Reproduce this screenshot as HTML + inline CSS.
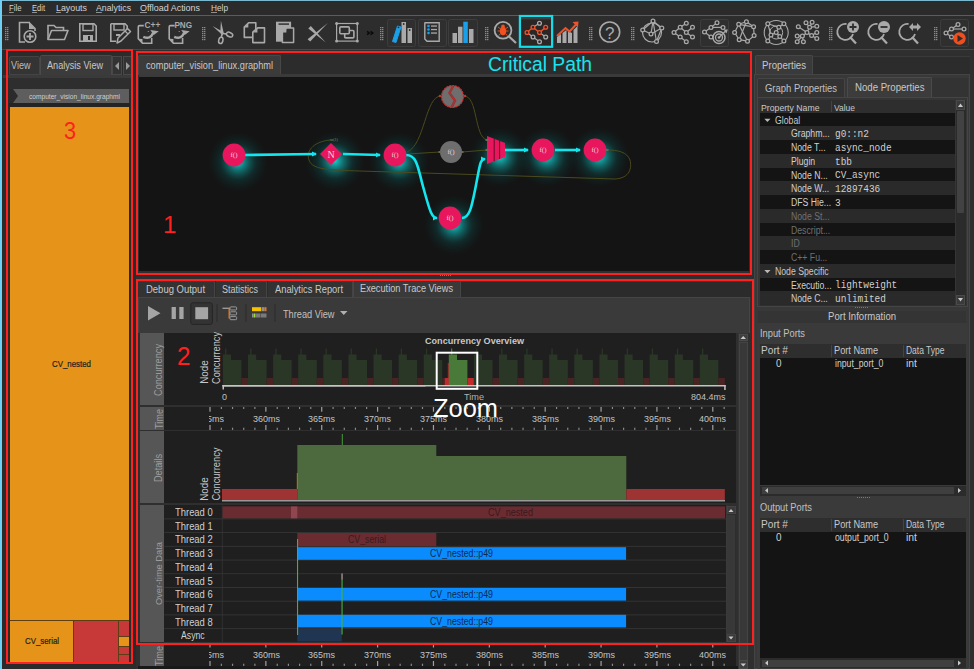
<!DOCTYPE html><html><head><meta charset="utf-8"><style>
*{margin:0;padding:0;box-sizing:border-box}
html,body{width:974px;height:669px;overflow:hidden;background:#2f2f2f;font-family:"Liberation Sans",sans-serif;color:#c8c8c8}
.t{position:absolute;white-space:nowrap;line-height:1}
svg{position:absolute;left:0;top:0;overflow:visible}
u{text-decoration-color:#909090}
</style></head><body>
<div style="position:absolute;left:0px;top:0px;width:974px;height:15px;background:#2b2b2b"></div>
<div style="position:absolute;left:0px;top:0px;width:974px;height:1px;background:#7ab8d0"></div>
<div style="position:absolute;left:2px;top:15px;width:972px;height:1px;background:#5c5c5c"></div>
<div class="t" style="left:9.00px;top:4.38px;font-size:9px;font-family:'Liberation Sans';font-weight:normal;color:#d2d2d2;transform:scaleX(0.862);transform-origin:0 0;"><u>F</u>ile</div>
<div class="t" style="left:32.00px;top:4.38px;font-size:9px;font-family:'Liberation Sans';font-weight:normal;color:#d2d2d2;transform:scaleX(0.838);transform-origin:0 0;"><u>E</u>dit</div>
<div class="t" style="left:56.00px;top:4.38px;font-size:9px;font-family:'Liberation Sans';font-weight:normal;color:#d2d2d2;transform:scaleX(0.983);transform-origin:0 0;"><u>L</u>ayouts</div>
<div class="t" style="left:96.00px;top:4.38px;font-size:9px;font-family:'Liberation Sans';font-weight:normal;color:#d2d2d2;transform:scaleX(0.972);transform-origin:0 0;"><u>A</u>nalytics</div>
<div class="t" style="left:140.00px;top:4.38px;font-size:9px;font-family:'Liberation Sans';font-weight:normal;color:#d2d2d2;transform:scaleX(0.994);transform-origin:0 0;"><u>O</u>ffload Actions</div>
<div class="t" style="left:211.00px;top:4.38px;font-size:9px;font-family:'Liberation Sans';font-weight:normal;color:#d2d2d2;transform:scaleX(0.918);transform-origin:0 0;"><u>H</u>elp</div>
<div style="position:absolute;left:2px;top:16px;width:972px;height:33px;background:#2d2d2d"></div>
<svg width="974" height="669"><rect x="5" y="27" width="1.4" height="1.2" fill="#8a8a8a"/><rect x="7" y="27" width="1.4" height="1.2" fill="#8a8a8a"/><rect x="5" y="29" width="1.4" height="1.2" fill="#8a8a8a"/><rect x="7" y="29" width="1.4" height="1.2" fill="#8a8a8a"/><rect x="5" y="31" width="1.4" height="1.2" fill="#8a8a8a"/><rect x="7" y="31" width="1.4" height="1.2" fill="#8a8a8a"/><rect x="5" y="33" width="1.4" height="1.2" fill="#8a8a8a"/><rect x="7" y="33" width="1.4" height="1.2" fill="#8a8a8a"/><rect x="5" y="35" width="1.4" height="1.2" fill="#8a8a8a"/><rect x="7" y="35" width="1.4" height="1.2" fill="#8a8a8a"/><rect x="5" y="37" width="1.4" height="1.2" fill="#8a8a8a"/><rect x="7" y="37" width="1.4" height="1.2" fill="#8a8a8a"/><rect x="5" y="39" width="1.4" height="1.2" fill="#8a8a8a"/><rect x="7" y="39" width="1.4" height="1.2" fill="#8a8a8a"/><rect x="202" y="27" width="1.4" height="1.2" fill="#8a8a8a"/><rect x="204" y="27" width="1.4" height="1.2" fill="#8a8a8a"/><rect x="202" y="29" width="1.4" height="1.2" fill="#8a8a8a"/><rect x="204" y="29" width="1.4" height="1.2" fill="#8a8a8a"/><rect x="202" y="31" width="1.4" height="1.2" fill="#8a8a8a"/><rect x="204" y="31" width="1.4" height="1.2" fill="#8a8a8a"/><rect x="202" y="33" width="1.4" height="1.2" fill="#8a8a8a"/><rect x="204" y="33" width="1.4" height="1.2" fill="#8a8a8a"/><rect x="202" y="35" width="1.4" height="1.2" fill="#8a8a8a"/><rect x="204" y="35" width="1.4" height="1.2" fill="#8a8a8a"/><rect x="202" y="37" width="1.4" height="1.2" fill="#8a8a8a"/><rect x="204" y="37" width="1.4" height="1.2" fill="#8a8a8a"/><rect x="202" y="39" width="1.4" height="1.2" fill="#8a8a8a"/><rect x="204" y="39" width="1.4" height="1.2" fill="#8a8a8a"/><rect x="380" y="27" width="1.4" height="1.2" fill="#8a8a8a"/><rect x="382" y="27" width="1.4" height="1.2" fill="#8a8a8a"/><rect x="380" y="29" width="1.4" height="1.2" fill="#8a8a8a"/><rect x="382" y="29" width="1.4" height="1.2" fill="#8a8a8a"/><rect x="380" y="31" width="1.4" height="1.2" fill="#8a8a8a"/><rect x="382" y="31" width="1.4" height="1.2" fill="#8a8a8a"/><rect x="380" y="33" width="1.4" height="1.2" fill="#8a8a8a"/><rect x="382" y="33" width="1.4" height="1.2" fill="#8a8a8a"/><rect x="380" y="35" width="1.4" height="1.2" fill="#8a8a8a"/><rect x="382" y="35" width="1.4" height="1.2" fill="#8a8a8a"/><rect x="380" y="37" width="1.4" height="1.2" fill="#8a8a8a"/><rect x="382" y="37" width="1.4" height="1.2" fill="#8a8a8a"/><rect x="380" y="39" width="1.4" height="1.2" fill="#8a8a8a"/><rect x="382" y="39" width="1.4" height="1.2" fill="#8a8a8a"/><rect x="485" y="27" width="1.4" height="1.2" fill="#8a8a8a"/><rect x="487" y="27" width="1.4" height="1.2" fill="#8a8a8a"/><rect x="485" y="29" width="1.4" height="1.2" fill="#8a8a8a"/><rect x="487" y="29" width="1.4" height="1.2" fill="#8a8a8a"/><rect x="485" y="31" width="1.4" height="1.2" fill="#8a8a8a"/><rect x="487" y="31" width="1.4" height="1.2" fill="#8a8a8a"/><rect x="485" y="33" width="1.4" height="1.2" fill="#8a8a8a"/><rect x="487" y="33" width="1.4" height="1.2" fill="#8a8a8a"/><rect x="485" y="35" width="1.4" height="1.2" fill="#8a8a8a"/><rect x="487" y="35" width="1.4" height="1.2" fill="#8a8a8a"/><rect x="485" y="37" width="1.4" height="1.2" fill="#8a8a8a"/><rect x="487" y="37" width="1.4" height="1.2" fill="#8a8a8a"/><rect x="485" y="39" width="1.4" height="1.2" fill="#8a8a8a"/><rect x="487" y="39" width="1.4" height="1.2" fill="#8a8a8a"/><rect x="589" y="27" width="1.4" height="1.2" fill="#8a8a8a"/><rect x="591" y="27" width="1.4" height="1.2" fill="#8a8a8a"/><rect x="589" y="29" width="1.4" height="1.2" fill="#8a8a8a"/><rect x="591" y="29" width="1.4" height="1.2" fill="#8a8a8a"/><rect x="589" y="31" width="1.4" height="1.2" fill="#8a8a8a"/><rect x="591" y="31" width="1.4" height="1.2" fill="#8a8a8a"/><rect x="589" y="33" width="1.4" height="1.2" fill="#8a8a8a"/><rect x="591" y="33" width="1.4" height="1.2" fill="#8a8a8a"/><rect x="589" y="35" width="1.4" height="1.2" fill="#8a8a8a"/><rect x="591" y="35" width="1.4" height="1.2" fill="#8a8a8a"/><rect x="589" y="37" width="1.4" height="1.2" fill="#8a8a8a"/><rect x="591" y="37" width="1.4" height="1.2" fill="#8a8a8a"/><rect x="589" y="39" width="1.4" height="1.2" fill="#8a8a8a"/><rect x="591" y="39" width="1.4" height="1.2" fill="#8a8a8a"/><rect x="631" y="27" width="1.4" height="1.2" fill="#8a8a8a"/><rect x="633" y="27" width="1.4" height="1.2" fill="#8a8a8a"/><rect x="631" y="29" width="1.4" height="1.2" fill="#8a8a8a"/><rect x="633" y="29" width="1.4" height="1.2" fill="#8a8a8a"/><rect x="631" y="31" width="1.4" height="1.2" fill="#8a8a8a"/><rect x="633" y="31" width="1.4" height="1.2" fill="#8a8a8a"/><rect x="631" y="33" width="1.4" height="1.2" fill="#8a8a8a"/><rect x="633" y="33" width="1.4" height="1.2" fill="#8a8a8a"/><rect x="631" y="35" width="1.4" height="1.2" fill="#8a8a8a"/><rect x="633" y="35" width="1.4" height="1.2" fill="#8a8a8a"/><rect x="631" y="37" width="1.4" height="1.2" fill="#8a8a8a"/><rect x="633" y="37" width="1.4" height="1.2" fill="#8a8a8a"/><rect x="631" y="39" width="1.4" height="1.2" fill="#8a8a8a"/><rect x="633" y="39" width="1.4" height="1.2" fill="#8a8a8a"/><rect x="829" y="27" width="1.4" height="1.2" fill="#8a8a8a"/><rect x="831" y="27" width="1.4" height="1.2" fill="#8a8a8a"/><rect x="829" y="29" width="1.4" height="1.2" fill="#8a8a8a"/><rect x="831" y="29" width="1.4" height="1.2" fill="#8a8a8a"/><rect x="829" y="31" width="1.4" height="1.2" fill="#8a8a8a"/><rect x="831" y="31" width="1.4" height="1.2" fill="#8a8a8a"/><rect x="829" y="33" width="1.4" height="1.2" fill="#8a8a8a"/><rect x="831" y="33" width="1.4" height="1.2" fill="#8a8a8a"/><rect x="829" y="35" width="1.4" height="1.2" fill="#8a8a8a"/><rect x="831" y="35" width="1.4" height="1.2" fill="#8a8a8a"/><rect x="829" y="37" width="1.4" height="1.2" fill="#8a8a8a"/><rect x="831" y="37" width="1.4" height="1.2" fill="#8a8a8a"/><rect x="829" y="39" width="1.4" height="1.2" fill="#8a8a8a"/><rect x="831" y="39" width="1.4" height="1.2" fill="#8a8a8a"/><rect x="934" y="27" width="1.4" height="1.2" fill="#8a8a8a"/><rect x="936" y="27" width="1.4" height="1.2" fill="#8a8a8a"/><rect x="934" y="29" width="1.4" height="1.2" fill="#8a8a8a"/><rect x="936" y="29" width="1.4" height="1.2" fill="#8a8a8a"/><rect x="934" y="31" width="1.4" height="1.2" fill="#8a8a8a"/><rect x="936" y="31" width="1.4" height="1.2" fill="#8a8a8a"/><rect x="934" y="33" width="1.4" height="1.2" fill="#8a8a8a"/><rect x="936" y="33" width="1.4" height="1.2" fill="#8a8a8a"/><rect x="934" y="35" width="1.4" height="1.2" fill="#8a8a8a"/><rect x="936" y="35" width="1.4" height="1.2" fill="#8a8a8a"/><rect x="934" y="37" width="1.4" height="1.2" fill="#8a8a8a"/><rect x="936" y="37" width="1.4" height="1.2" fill="#8a8a8a"/><rect x="934" y="39" width="1.4" height="1.2" fill="#8a8a8a"/><rect x="936" y="39" width="1.4" height="1.2" fill="#8a8a8a"/><rect x="387.5" y="19.5" width="28" height="27" rx="2" fill="#2f2f2f" stroke="#3d3d3d" stroke-width="1"/><rect x="418.5" y="19.5" width="28" height="27" rx="2" fill="#2f2f2f" stroke="#3d3d3d" stroke-width="1"/><rect x="448.5" y="19.5" width="29" height="27" rx="2" fill="#2f2f2f" stroke="#3d3d3d" stroke-width="1"/><rect x="700.5" y="19.5" width="28" height="27" rx="2" fill="#2f2f2f" stroke="#3d3d3d" stroke-width="1"/><rect x="940.5" y="19.5" width="28" height="27" rx="2" fill="#2f2f2f" stroke="#3d3d3d" stroke-width="1"/><path d="M30,22.5 H19.5 V42 H25" fill="none" stroke="#a9a9a9" stroke-width="1.6"/><path d="M29,22.5 L35,28.5 V31" fill="none" stroke="#a9a9a9" stroke-width="1.6"/><path d="M29,23 V29 H35 Z" fill="#a9a9a9"/><circle cx="30" cy="36.5" r="5.8" fill="#2d2d2d" stroke="#a9a9a9" stroke-width="1.6"/><path d="M30,33 V40 M26.5,36.5 H33.5" stroke="#a9a9a9" stroke-width="1.8"/><path d="M48,39.5 V25.5 H54 L56,27.5 H63.5 V30" fill="none" stroke="#a9a9a9" stroke-width="1.6"/><path d="M48,39.5 L51.5,30.5 H68 L64.5,39.5 Z" fill="none" stroke="#a9a9a9" stroke-width="1.6" stroke-linejoin="round"/><path d="M79.8,23.8 H94 L96.2,26 V41.2 H79.8 Z" fill="none" stroke="#a9a9a9" stroke-width="1.6"/><rect x="83" y="24" width="10" height="6.5" fill="none" stroke="#a9a9a9" stroke-width="1.4"/><rect x="83" y="35" width="10" height="6" fill="#a9a9a9"/><rect x="88" y="36" width="2" height="4" fill="#2d2d2d"/><path d="M110.8,23.8 H125 L127.2,26 V29 M110.8,23.8 V41.2 H116" fill="none" stroke="#a9a9a9" stroke-width="1.6"/><rect x="114" y="24" width="10" height="6" fill="none" stroke="#a9a9a9" stroke-width="1.4"/><path d="M116,35 H120" stroke="#a9a9a9" stroke-width="2"/><path d="M117,43 L118,38 L127.5,28.5 L130.5,31.5 L121,41 Z" fill="#2d2d2d" stroke="#a9a9a9" stroke-width="1.5" stroke-linejoin="round"/><path d="M125,31 L128,34" stroke="#a9a9a9" stroke-width="1.2"/><path d="M143.8,25.6 H139.5 Q138.3,25.6 138.3,26.8 V38.8 L142.5,43.3 H151.70000000000002 V38" fill="none" stroke="#a9a9a9" stroke-width="1.6"/><path d="M138.3,38.8 L142.5,39 L142.5,43.3 Z" fill="#a9a9a9"/><path d="M143.3,36.8 Q150.3,40 153.10000000000002,33" fill="none" stroke="#a9a9a9" stroke-width="2.4"/><path d="M150.3,30 L158.8,31.2 L153.8,35 Z" fill="#a9a9a9"/><circle cx="148.3" cy="31.5" r="0.6" fill="#a9a9a9"/><text x="144.5" y="27.6" font-family="Liberation Sans" font-weight="bold" font-size="9.5" fill="#a9a9a9" textLength="15.8" lengthAdjust="spacingAndGlyphs">C++</text><path d="M174.7,25.6 H170.39999999999998 Q169.2,25.6 169.2,26.8 V38.8 L173.39999999999998,43.3 H182.6 V38" fill="none" stroke="#a9a9a9" stroke-width="1.6"/><path d="M169.2,38.8 L173.39999999999998,39 L173.39999999999998,43.3 Z" fill="#a9a9a9"/><path d="M174.2,36.8 Q181.2,40 184.0,33" fill="none" stroke="#a9a9a9" stroke-width="2.4"/><path d="M181.2,30 L189.7,31.2 L184.7,35 Z" fill="#a9a9a9"/><circle cx="179.2" cy="31.5" r="0.6" fill="#a9a9a9"/><text x="174.4" y="27.6" font-family="Liberation Sans" font-weight="bold" font-size="9.5" fill="#a9a9a9" textLength="17.7" lengthAdjust="spacingAndGlyphs">PNG</text><path d="M220.9,20.8 L223.6,32.6 L222,35.5 L220.3,32.6 Z" fill="#a9a9a9"/><path d="M212.5,26 L221.5,31 L221.3,34 Z" fill="#a9a9a9"/><path d="M222.3,33.5 L221.3,37" stroke="#a9a9a9" stroke-width="1.6"/><path d="M222.8,33.5 L226.5,34" stroke="#a9a9a9" stroke-width="1.6"/><ellipse cx="220.8" cy="40.4" rx="2.1" ry="3.2" transform="rotate(15 220.8 40.4)" fill="none" stroke="#a9a9a9" stroke-width="1.5"/><ellipse cx="229.6" cy="34.6" rx="3.3" ry="2.1" transform="rotate(25 229.6 34.6)" fill="none" stroke="#a9a9a9" stroke-width="1.5"/><path d="M255.8,30 V22.8 H248.6 L244.3,27.1 V37.4 H252" fill="none" stroke="#a9a9a9" stroke-width="1.6" stroke-linejoin="round"/><path d="M248.3,23.2 V27.4 H244.2 Z" fill="#a9a9a9"/><path d="M257.7,27.9 H264.5 V42.6 H252.8 V32.2 Z" fill="#2d2d2d" stroke="#a9a9a9" stroke-width="1.6" stroke-linejoin="round"/><path d="M257.4,28.3 V32.5 H253.2 Z" fill="#a9a9a9"/><rect x="276" y="21.7" width="15.1" height="20" fill="#a9a9a9"/><rect x="278.5" y="23.3" width="10.5" height="1.6" fill="#3a3a3a"/><path d="M286.6,27.9 H293.6 V42.6 H282.4 V32.2 Z" fill="#2d2d2d" stroke="#a9a9a9" stroke-width="1.5" stroke-linejoin="round"/><path d="M286.4,28.3 V32.4 H282.6 Z" fill="#a9a9a9"/><path d="M307.6,39.2 L310.2,41.6 L327.8,23 Z" fill="#a9a9a9"/><path d="M308.3,28.4 L310.8,26 L325.8,42.5 Z" fill="#a9a9a9"/><rect x="336.6" y="23.5" width="20.7" height="17.6" fill="none" stroke="#a9a9a9" stroke-width="1.2"/><circle cx="336.6" cy="23.5" r="1.5" fill="#a9a9a9"/><circle cx="357.3" cy="23.5" r="1.5" fill="#a9a9a9"/><circle cx="336.6" cy="41.1" r="1.5" fill="#a9a9a9"/><circle cx="357.3" cy="41.1" r="1.5" fill="#a9a9a9"/><rect x="344.7" y="30.5" width="9.2" height="7.4" rx="1" fill="none" stroke="#a9a9a9" stroke-width="1.6"/><rect x="339.8" y="26.9" width="9.5" height="6.8" rx="1" fill="#2d2d2d" stroke="#a9a9a9" stroke-width="1.6"/><path d="M367,31.3 L369.3,33 L367,34.7 M370.5,31.3 L372.8,33 L370.5,34.7" fill="none" stroke="#0a0a0a" stroke-width="1.5"/><path d="M392.5,41.5 L397.5,26 L401,27 L396,42.5 Z" fill="#1aa0e8" stroke="#1aa0e8" stroke-width="1"/><rect x="401.5" y="22" width="4.5" height="21" fill="#a9a9a9"/><rect x="407.5" y="28" width="4.5" height="15" fill="#a9a9a9"/><circle cx="403.7" cy="24" r="0.9" fill="#2d2d2d"/><circle cx="409.7" cy="30" r="0.9" fill="#2d2d2d"/><circle cx="398.5" cy="27.3" r="0.9" fill="#2d2d2d"/><path d="M425,22.8 H439.2 V41.2 H427 L424.8,39 V23 Z" fill="none" stroke="#a9a9a9" stroke-width="1.4"/><circle cx="428.5" cy="26" r="1.3" fill="#1aa0e8"/><rect x="431" y="25.4" width="6" height="1.3" fill="#a9a9a9"/><circle cx="428.5" cy="29.5" r="1.3" fill="#1aa0e8"/><rect x="431" y="28.9" width="6" height="1.3" fill="#a9a9a9"/><circle cx="428.5" cy="33" r="1.3" fill="#1aa0e8"/><rect x="431" y="32.4" width="6" height="1.3" fill="#a9a9a9"/><rect x="452.5" y="33" width="4.5" height="10" fill="#a9a9a9"/><rect x="458" y="26.7" width="4.5" height="16.3" fill="#a9a9a9"/><rect x="463.3" y="21.7" width="4.5" height="21.3" fill="#1aa0e8"/><rect x="469" y="29" width="4.5" height="14" fill="#a9a9a9"/><circle cx="503" cy="30.3" r="8.4" fill="none" stroke="#a9a9a9" stroke-width="1.8"/><path d="M509,36.5 L516,43" stroke="#a9a9a9" stroke-width="2.2"/><ellipse cx="503" cy="31" rx="3.2" ry="4.3" fill="#f2501e"/><circle cx="503" cy="26.3" r="1.8" fill="#f2501e"/><path d="M498,27 L500,28.5 M508,27 L506,28.5 M497.5,31 H500 M508.5,31 H506 M498.5,35.5 L500.3,34 M507.5,35.5 L505.7,34" stroke="#f2501e" stroke-width="0.9"/><rect x="519.9" y="16" width="32.2" height="30.8" fill="#2b2727" stroke="#12dde8" stroke-width="2.2"/><rect x="521" y="18.3" width="30" height="1" fill="#4a4a4a"/><path d="M533,27.3 L539.5,23.2 M527,32.5 L533,37 L539.5,41.7 M539.5,32.5 L545.7,37" stroke="#a9a9a9" stroke-width="1.1" fill="none"/><path d="M527,32.5 L533,27.3 L539.5,32.5 L545.7,27.3" stroke="#f0522a" stroke-width="1.4" fill="none"/><circle cx="539.5" cy="23.2" r="1.9" fill="#2b2727" stroke="#a9a9a9" stroke-width="1.3"/><circle cx="533" cy="37" r="1.9" fill="#2b2727" stroke="#a9a9a9" stroke-width="1.3"/><circle cx="545.7" cy="37" r="1.9" fill="#2b2727" stroke="#a9a9a9" stroke-width="1.3"/><circle cx="539.5" cy="41.7" r="1.9" fill="#2b2727" stroke="#a9a9a9" stroke-width="1.3"/><circle cx="527" cy="32.5" r="1.9" fill="#2b2727" stroke="#f0522a" stroke-width="1.3"/><circle cx="533" cy="27.3" r="1.9" fill="#2b2727" stroke="#f0522a" stroke-width="1.3"/><circle cx="539.5" cy="32.5" r="1.9" fill="#2b2727" stroke="#f0522a" stroke-width="1.3"/><circle cx="545.7" cy="27.3" r="1.9" fill="#2b2727" stroke="#f0522a" stroke-width="1.3"/><path d="M557,43 V37 L561,34 V43 Z M562.5,43 V33 L566.5,30 V43 Z M568,43 V31 L572,33 V43 Z M573.5,43 V30 L577.5,26 V43 Z" fill="#a9a9a9"/><path d="M557,36 L565.5,28 L569.5,31.5 L576,24.5" fill="none" stroke="#f0522a" stroke-width="2"/><path d="M572.5,22 L578.5,21.5 L578,27.5 Z" fill="#f0522a"/><circle cx="609.7" cy="32" r="10" fill="none" stroke="#a9a9a9" stroke-width="1.6"/><text x="609.7" y="38.8" text-anchor="middle" font-family="Liberation Sans" font-size="17" fill="#a9a9a9">?</text><circle cx="652" cy="32.5" r="9.5" fill="none" stroke="#a9a9a9" stroke-width="1.2"/><line x1="653" y1="21" x2="661.8" y2="28" stroke="#a9a9a9" stroke-width="1.2"/><line x1="653" y1="21" x2="642.7" y2="30" stroke="#a9a9a9" stroke-width="1.2"/><line x1="642.7" y1="30" x2="651" y2="34" stroke="#a9a9a9" stroke-width="1.2"/><line x1="651" y1="34" x2="661.8" y2="28" stroke="#a9a9a9" stroke-width="1.2"/><line x1="653" y1="21" x2="651" y2="34" stroke="#a9a9a9" stroke-width="1.2"/><line x1="661.8" y1="28" x2="656.5" y2="41.5" stroke="#a9a9a9" stroke-width="1.2"/><line x1="653" y1="21" x2="656.5" y2="41.5" stroke="#a9a9a9" stroke-width="1.2"/><circle cx="653" cy="21" r="1.9" fill="#2d2d2d" stroke="#a9a9a9" stroke-width="1.25"/><circle cx="661.8" cy="28" r="1.9" fill="#2d2d2d" stroke="#a9a9a9" stroke-width="1.25"/><circle cx="642.7" cy="30" r="1.9" fill="#2d2d2d" stroke="#a9a9a9" stroke-width="1.25"/><circle cx="651" cy="34" r="1.9" fill="#2d2d2d" stroke="#a9a9a9" stroke-width="1.25"/><circle cx="656.5" cy="41.5" r="1.9" fill="#2d2d2d" stroke="#a9a9a9" stroke-width="1.25"/><line x1="674" y1="32.5" x2="680.2" y2="27.3" stroke="#a9a9a9" stroke-width="1.2"/><line x1="674" y1="32.5" x2="680.2" y2="37.1" stroke="#a9a9a9" stroke-width="1.2"/><line x1="680.2" y1="27.3" x2="686.3" y2="23.2" stroke="#a9a9a9" stroke-width="1.2"/><line x1="680.2" y1="27.3" x2="686.3" y2="32.5" stroke="#a9a9a9" stroke-width="1.2"/><line x1="680.2" y1="37.1" x2="686.3" y2="41.7" stroke="#a9a9a9" stroke-width="1.2"/><line x1="686.3" y1="32.5" x2="692.5" y2="27.3" stroke="#a9a9a9" stroke-width="1.2"/><line x1="686.3" y1="32.5" x2="692.5" y2="37.1" stroke="#a9a9a9" stroke-width="1.2"/><circle cx="674" cy="32.5" r="1.9" fill="#2d2d2d" stroke="#a9a9a9" stroke-width="1.25"/><circle cx="680.2" cy="27.3" r="1.9" fill="#2d2d2d" stroke="#a9a9a9" stroke-width="1.25"/><circle cx="680.2" cy="37.1" r="1.9" fill="#2d2d2d" stroke="#a9a9a9" stroke-width="1.25"/><circle cx="686.3" cy="23.2" r="1.9" fill="#2d2d2d" stroke="#a9a9a9" stroke-width="1.25"/><circle cx="686.3" cy="32.5" r="1.9" fill="#2d2d2d" stroke="#a9a9a9" stroke-width="1.25"/><circle cx="686.3" cy="41.7" r="1.9" fill="#2d2d2d" stroke="#a9a9a9" stroke-width="1.25"/><circle cx="692.5" cy="27.3" r="1.9" fill="#2d2d2d" stroke="#a9a9a9" stroke-width="1.25"/><circle cx="692.5" cy="37.1" r="1.9" fill="#2d2d2d" stroke="#a9a9a9" stroke-width="1.25"/><line x1="704.5" y1="32" x2="711" y2="27.4" stroke="#a9a9a9" stroke-width="1.2"/><line x1="704.5" y1="32" x2="711" y2="37" stroke="#a9a9a9" stroke-width="1.2"/><line x1="711" y1="27.4" x2="717" y2="22.7" stroke="#a9a9a9" stroke-width="1.2"/><line x1="711" y1="27.4" x2="723" y2="27.4" stroke="#a9a9a9" stroke-width="1.2"/><circle cx="704.5" cy="32" r="1.9" fill="#2d2d2d" stroke="#a9a9a9" stroke-width="1.25"/><circle cx="711" cy="27.4" r="1.9" fill="#2d2d2d" stroke="#a9a9a9" stroke-width="1.25"/><circle cx="711" cy="37" r="1.9" fill="#2d2d2d" stroke="#a9a9a9" stroke-width="1.25"/><circle cx="717" cy="22.7" r="1.9" fill="#2d2d2d" stroke="#a9a9a9" stroke-width="1.25"/><circle cx="723" cy="27.4" r="1.9" fill="#2d2d2d" stroke="#a9a9a9" stroke-width="1.25"/><circle cx="719" cy="37.5" r="6" fill="#2f2f2f" stroke="#a9a9a9" stroke-width="1.5"/><circle cx="719" cy="37.5" r="3.5" fill="none" stroke="#a9a9a9" stroke-width="1.3"/><circle cx="719" cy="37.5" r="1.3" fill="#a9a9a9"/><path d="M719,37.5 L726,30.5 M724,30 L727,30 L726,33" stroke="#a9a9a9" stroke-width="1.2" fill="none"/><line x1="738.7" y1="24.3" x2="746.4" y2="21.7" stroke="#a9a9a9" stroke-width="1.2"/><line x1="746.4" y1="21.7" x2="753.6" y2="26.8" stroke="#a9a9a9" stroke-width="1.2"/><line x1="753.6" y1="26.8" x2="754.1" y2="35.6" stroke="#a9a9a9" stroke-width="1.2"/><line x1="754.1" y1="35.6" x2="747.5" y2="41.2" stroke="#a9a9a9" stroke-width="1.2"/><line x1="747.5" y1="41.2" x2="739.2" y2="39.7" stroke="#a9a9a9" stroke-width="1.2"/><line x1="739.2" y1="39.7" x2="734.6" y2="32.5" stroke="#a9a9a9" stroke-width="1.2"/><line x1="734.6" y1="32.5" x2="738.7" y2="24.3" stroke="#a9a9a9" stroke-width="1.2"/><line x1="738.7" y1="24.3" x2="747.5" y2="41.2" stroke="#a9a9a9" stroke-width="1.2"/><line x1="746.4" y1="21.7" x2="739.2" y2="39.7" stroke="#a9a9a9" stroke-width="1.2"/><line x1="738.7" y1="24.3" x2="753.6" y2="26.8" stroke="#a9a9a9" stroke-width="1.2"/><circle cx="738.7" cy="24.3" r="1.9" fill="#2d2d2d" stroke="#a9a9a9" stroke-width="1.25"/><circle cx="746.4" cy="21.7" r="1.9" fill="#2d2d2d" stroke="#a9a9a9" stroke-width="1.25"/><circle cx="753.6" cy="26.8" r="1.9" fill="#2d2d2d" stroke="#a9a9a9" stroke-width="1.25"/><circle cx="754.1" cy="35.6" r="1.9" fill="#2d2d2d" stroke="#a9a9a9" stroke-width="1.25"/><circle cx="747.5" cy="41.2" r="1.9" fill="#2d2d2d" stroke="#a9a9a9" stroke-width="1.25"/><circle cx="739.2" cy="39.7" r="1.9" fill="#2d2d2d" stroke="#a9a9a9" stroke-width="1.25"/><circle cx="734.6" cy="32.5" r="1.9" fill="#2d2d2d" stroke="#a9a9a9" stroke-width="1.25"/><circle cx="776.2" cy="32.5" r="12" fill="none" stroke="#a9a9a9" stroke-width="1.1"/><circle cx="776.2" cy="32.5" r="6.5" fill="none" stroke="#a9a9a9" stroke-width="1"/><line x1="767.8" y1="23.8" x2="771" y2="35" stroke="#a9a9a9" stroke-width="1.2"/><line x1="767.8" y1="23.8" x2="778.8" y2="27.3" stroke="#a9a9a9" stroke-width="1.2"/><line x1="778.8" y1="27.3" x2="776.2" y2="32.5" stroke="#a9a9a9" stroke-width="1.2"/><line x1="776.2" y1="32.5" x2="771" y2="35" stroke="#a9a9a9" stroke-width="1.2"/><line x1="776.2" y1="32.5" x2="779.8" y2="36.6" stroke="#a9a9a9" stroke-width="1.2"/><line x1="771" y1="35" x2="767.8" y2="40.9" stroke="#a9a9a9" stroke-width="1.2"/><line x1="779.8" y1="36.6" x2="783.9" y2="40.9" stroke="#a9a9a9" stroke-width="1.2"/><line x1="778.8" y1="27.3" x2="783.9" y2="23.8" stroke="#a9a9a9" stroke-width="1.2"/><circle cx="767.8" cy="23.8" r="1.9" fill="#2d2d2d" stroke="#a9a9a9" stroke-width="1.25"/><circle cx="783.9" cy="23.8" r="1.9" fill="#2d2d2d" stroke="#a9a9a9" stroke-width="1.25"/><circle cx="767.8" cy="40.9" r="1.9" fill="#2d2d2d" stroke="#a9a9a9" stroke-width="1.25"/><circle cx="783.9" cy="40.9" r="1.9" fill="#2d2d2d" stroke="#a9a9a9" stroke-width="1.25"/><circle cx="778.8" cy="27.3" r="1.9" fill="#2d2d2d" stroke="#a9a9a9" stroke-width="1.25"/><circle cx="776.2" cy="32.5" r="1.9" fill="#2d2d2d" stroke="#a9a9a9" stroke-width="1.25"/><circle cx="771" cy="35" r="1.9" fill="#2d2d2d" stroke="#a9a9a9" stroke-width="1.25"/><circle cx="779.8" cy="36.6" r="1.9" fill="#2d2d2d" stroke="#a9a9a9" stroke-width="1.25"/><line x1="807" y1="32.5" x2="798.3" y2="26.8" stroke="#a9a9a9" stroke-width="1.2"/><line x1="807" y1="32.5" x2="809.6" y2="27.3" stroke="#a9a9a9" stroke-width="1.2"/><line x1="809.6" y1="27.3" x2="806" y2="22.7" stroke="#a9a9a9" stroke-width="1.2"/><line x1="809.6" y1="27.3" x2="812.1" y2="22.2" stroke="#a9a9a9" stroke-width="1.2"/><line x1="809.6" y1="27.3" x2="816.8" y2="26.3" stroke="#a9a9a9" stroke-width="1.2"/><line x1="807" y1="32.5" x2="811.6" y2="35.6" stroke="#a9a9a9" stroke-width="1.2"/><line x1="811.6" y1="35.6" x2="816.8" y2="32.5" stroke="#a9a9a9" stroke-width="1.2"/><line x1="811.6" y1="35.6" x2="816.8" y2="38.6" stroke="#a9a9a9" stroke-width="1.2"/><line x1="807" y1="32.5" x2="802.4" y2="36.1" stroke="#a9a9a9" stroke-width="1.2"/><line x1="802.4" y1="36.1" x2="797.2" y2="36.1" stroke="#a9a9a9" stroke-width="1.2"/><line x1="802.4" y1="36.1" x2="797.2" y2="41.7" stroke="#a9a9a9" stroke-width="1.2"/><line x1="802.4" y1="36.1" x2="803.4" y2="41.7" stroke="#a9a9a9" stroke-width="1.2"/><circle cx="807" cy="32.5" r="1.9" fill="#2d2d2d" stroke="#a9a9a9" stroke-width="1.25"/><circle cx="798.3" cy="26.8" r="1.9" fill="#2d2d2d" stroke="#a9a9a9" stroke-width="1.25"/><circle cx="809.6" cy="27.3" r="1.9" fill="#2d2d2d" stroke="#a9a9a9" stroke-width="1.25"/><circle cx="806" cy="22.7" r="1.9" fill="#2d2d2d" stroke="#a9a9a9" stroke-width="1.25"/><circle cx="812.1" cy="22.2" r="1.9" fill="#2d2d2d" stroke="#a9a9a9" stroke-width="1.25"/><circle cx="816.8" cy="26.3" r="1.9" fill="#2d2d2d" stroke="#a9a9a9" stroke-width="1.25"/><circle cx="816.8" cy="32.5" r="1.9" fill="#2d2d2d" stroke="#a9a9a9" stroke-width="1.25"/><circle cx="811.6" cy="35.6" r="1.9" fill="#2d2d2d" stroke="#a9a9a9" stroke-width="1.25"/><circle cx="816.8" cy="38.6" r="1.9" fill="#2d2d2d" stroke="#a9a9a9" stroke-width="1.25"/><circle cx="802.4" cy="36.1" r="1.9" fill="#2d2d2d" stroke="#a9a9a9" stroke-width="1.25"/><circle cx="797.2" cy="36.1" r="1.9" fill="#2d2d2d" stroke="#a9a9a9" stroke-width="1.25"/><circle cx="797.2" cy="41.7" r="1.9" fill="#2d2d2d" stroke="#a9a9a9" stroke-width="1.25"/><circle cx="803.4" cy="41.7" r="1.9" fill="#2d2d2d" stroke="#a9a9a9" stroke-width="1.25"/><path d="M846.5,24 A8,8 0 1 0 853,34" fill="none" stroke="#a9a9a9" stroke-width="1.8"/><path d="M850,37 L856,43.5" stroke="#a9a9a9" stroke-width="2.3"/><circle cx="853" cy="27" r="6" fill="#a9a9a9"/><path d="M853,23.5 V30.5 M849.5,27 H856.5" stroke="#2d2d2d" stroke-width="1.8"/><path d="M877.5,24 A8,8 0 1 0 884,34" fill="none" stroke="#a9a9a9" stroke-width="1.8"/><path d="M881,37 L887,43.5" stroke="#a9a9a9" stroke-width="2.3"/><circle cx="884" cy="27" r="6" fill="#a9a9a9"/><path d="M880.5,27 H887.5" stroke="#2d2d2d" stroke-width="1.8"/><path d="M908.5,24 A8,8 0 1 0 915,34" fill="none" stroke="#a9a9a9" stroke-width="1.8"/><path d="M912,37 L918,43.5" stroke="#a9a9a9" stroke-width="2.3"/><path d="M909,27 L913,23 V25.5 H917 V23 L921,27 L917,31 V28.5 H913 V31 Z" fill="#a9a9a9"/><line x1="946" y1="33" x2="951.5" y2="29" stroke="#a9a9a9" stroke-width="1.2"/><line x1="946" y1="33" x2="951.5" y2="37" stroke="#a9a9a9" stroke-width="1.2"/><line x1="951.5" y1="29" x2="958" y2="24.5" stroke="#a9a9a9" stroke-width="1.2"/><line x1="951.5" y1="29" x2="964" y2="29" stroke="#a9a9a9" stroke-width="1.2"/><circle cx="946" cy="33" r="1.9" fill="#2d2d2d" stroke="#a9a9a9" stroke-width="1.25"/><circle cx="951.5" cy="29" r="1.9" fill="#2d2d2d" stroke="#a9a9a9" stroke-width="1.25"/><circle cx="951.5" cy="37" r="1.9" fill="#2d2d2d" stroke="#a9a9a9" stroke-width="1.25"/><circle cx="958" cy="24.5" r="1.9" fill="#2d2d2d" stroke="#a9a9a9" stroke-width="1.25"/><circle cx="964" cy="29" r="1.9" fill="#2d2d2d" stroke="#a9a9a9" stroke-width="1.25"/><circle cx="959.5" cy="38.5" r="6.2" fill="#f04e1c"/><path d="M957.5,35 L963,38.5 L957.5,42 Z" fill="#2d2d2d"/></svg>
<div style="position:absolute;left:2px;top:49px;width:134px;height:620px;background:#2b2b2b"></div>
<div style="position:absolute;left:2px;top:49px;width:134px;height:1px;background:#3a3a3a"></div>
<div style="position:absolute;left:9px;top:56px;width:31px;height:19px;background:#343434;border:1px solid #444;border-radius:2px 2px 0 0"></div>
<div class="t" style="left:11.00px;top:59.69px;font-size:11px;font-family:'Liberation Sans';font-weight:normal;color:#bdbdbd;transform:scaleX(0.825);transform-origin:0 0;">View</div>
<div style="position:absolute;left:40px;top:55px;width:72px;height:21px;background:#3b3b3b;border:1px solid #4a4a4a;border-bottom:none;border-radius:2px 2px 0 0"></div>
<div class="t" style="left:47.00px;top:59.69px;font-size:11px;font-family:'Liberation Sans';font-weight:normal;color:#c8c8c8;transform:scaleX(0.828);transform-origin:0 0;">Analysis View</div>
<div style="position:absolute;left:112px;top:56px;width:10px;height:19px;background:#333;border:1px solid #484848"></div>
<div style="position:absolute;left:123px;top:56px;width:9px;height:19px;background:#333;border:1px solid #484848"></div>
<svg width="974" height="669"><polygon points="119,62 115,66 119,70" fill="#9a9a9a"/><polygon points="126,62 130,66 126,70" fill="#9a9a9a"/></svg>
<div style="position:absolute;left:3px;top:75px;width:130px;height:3px;background:#3a3a3a"></div>
<div style="position:absolute;left:9px;top:78px;width:121px;height:11px;background:#2e2e2e"></div>
<svg width="974" height="669"><polygon points="13,89 129,89 129,103 13,103 18,96" fill="#5e5e5e"/></svg>
<div class="t" style="left:29.00px;top:93.07px;font-size:7px;font-family:'Liberation Sans';font-weight:normal;color:#cfcfcf;transform:scaleX(0.943);transform-origin:0 0;">computer_vision_linux.graphml</div>
<div style="position:absolute;left:9px;top:103px;width:121px;height:4px;background:#242424"></div>
<div style="position:absolute;left:10px;top:107px;width:119px;height:513px;background:#e69419"></div>
<div style="position:absolute;left:10px;top:620px;width:119px;height:1px;background:#5c3d14"></div>
<div class="t" style="left:52.00px;top:359.88px;font-size:9px;font-family:'Liberation Sans';font-weight:normal;color:#1e1e1e;transform:scaleX(0.876);transform-origin:0 0;-webkit-text-stroke:0.2px #1e1e1e">CV_nested</div>
<div style="position:absolute;left:10px;top:621px;width:63px;height:41px;background:#e69419"></div>
<div style="position:absolute;left:73px;top:621px;width:1px;height:41px;background:#5c3d14"></div>
<div class="t" style="left:25.00px;top:637.38px;font-size:9px;font-family:'Liberation Sans';font-weight:normal;color:#1e1e1e;transform:scaleX(0.871);transform-origin:0 0;-webkit-text-stroke:0.2px #1e1e1e">CV_serial</div>
<div style="position:absolute;left:74px;top:621px;width:44px;height:41px;background:#c73838"></div>
<div style="position:absolute;left:118px;top:621px;width:1px;height:41px;background:#5c3d14"></div>
<div style="position:absolute;left:119px;top:621px;width:10px;height:15px;background:#c73838"></div>
<div style="position:absolute;left:119px;top:636px;width:10px;height:1px;background:#5c3d14"></div>
<div style="position:absolute;left:119px;top:637px;width:10px;height:9px;background:#e69419"></div>
<div style="position:absolute;left:119px;top:646px;width:10px;height:1px;background:#5c3d14"></div>
<div style="position:absolute;left:119px;top:647px;width:10px;height:7px;background:#c73838"></div>
<div style="position:absolute;left:119px;top:654px;width:10px;height:1px;background:#5c3d14"></div>
<div style="position:absolute;left:119px;top:655px;width:10px;height:7px;background:#c73838"></div>
<div class="t" style="left:64.00px;top:118.68px;font-size:24px;font-family:'Liberation Sans';font-weight:normal;color:#ff2020;transform:scaleX(0.899);transform-origin:0 0;">3</div>
<div style="position:absolute;left:136px;top:49px;width:617px;height:227px;background:#2f2f2f"></div>
<div style="position:absolute;left:138px;top:55px;width:143px;height:20px;background:#3b3b3b;border:1px solid #474747;border-bottom:none;border-radius:2px 2px 0 0"></div>
<div class="t" style="left:146.00px;top:59.69px;font-size:11px;font-family:'Liberation Sans';font-weight:normal;color:#c8c8c8;transform:scaleX(0.838);transform-origin:0 0;">computer_vision_linux.graphml</div>
<div style="position:absolute;left:281px;top:55px;width:469px;height:19px;background:#2c2c2c"></div>
<div style="position:absolute;left:139px;top:74px;width:611px;height:3px;background:#3a3a3a"></div>
<div class="t" style="left:488.00px;top:54.07px;font-size:20px;font-family:'Liberation Sans';font-weight:normal;color:#19e3f0;transform:scaleX(0.965);transform-origin:0 0;">Critical Path</div>
<div style="position:absolute;left:139px;top:77px;width:610px;height:194px;background:#141414"></div>
<svg width="974" height="669"><g><defs><radialGradient id="glow"><stop offset="0" stop-color="#20e0e0" stop-opacity="0.9"/><stop offset="0.3" stop-color="#10b0b0" stop-opacity="0.55"/><stop offset="0.6" stop-color="#087878" stop-opacity="0.22"/><stop offset="1" stop-color="#044" stop-opacity="0"/></radialGradient><marker id="arr" markerWidth="6" markerHeight="6" refX="4" refY="3" orient="auto" markerUnits="userSpaceOnUse"><path d="M0,0.5 L5,3 L0,5.5 Z" fill="#12e6ee"/></marker></defs><circle cx="238" cy="162" r="30" fill="url(#glow)"/><circle cx="335" cy="161" r="30" fill="url(#glow)"/><circle cx="399" cy="162" r="30" fill="url(#glow)"/><circle cx="454" cy="225" r="30" fill="url(#glow)"/><circle cx="500" cy="157" r="30" fill="url(#glow)"/><circle cx="547" cy="157" r="30" fill="url(#glow)"/><circle cx="599" cy="157" r="30" fill="url(#glow)"/><path d="M330,140 C312,142 306,152 309,160 C312,170 330,170 360,171 L615,179 C630,178 632,168 630,160 C627,152 618,150 607,150" fill="none" stroke="#4a4a1c" stroke-width="1"/><path d="M407,152 C425,145 425,96 441,96" fill="none" stroke="#4a4a1c" stroke-width="1"/><path d="M407,154 L440,152" fill="none" stroke="#4a4a1c" stroke-width="1"/><path d="M464,96 C478,96 474,137 487,140" fill="none" stroke="#4a4a1c" stroke-width="1"/><path d="M462,152 L487,150" fill="none" stroke="#4a4a1c" stroke-width="1"/><circle cx="440" cy="96" r="1.3" fill="#c83030"/><circle cx="465" cy="96" r="1.3" fill="#c83030"/><path d="M245,155 L316,154" stroke="#12e6ee" stroke-width="2.6" fill="none" marker-end="url(#arr)"/><path d="M343,154 L380,155" stroke="#12e6ee" stroke-width="2.6" fill="none" marker-end="url(#arr)"/><path d="M406,155 C418,155 418,170 424,190 C430,212 432,218 437,218" stroke="#12e6ee" stroke-width="2.6" fill="none" marker-end="url(#arr)"/><path d="M462,218 C470,218 472,205 476,185 C480,165 480,159 485,159" stroke="#12e6ee" stroke-width="2.6" fill="none" marker-end="url(#arr)"/><path d="M505,150 L528,150" stroke="#12e6ee" stroke-width="2.6" fill="none" marker-end="url(#arr)"/><path d="M555,150 L580,150" stroke="#12e6ee" stroke-width="2.6" fill="none" marker-end="url(#arr)"/><circle cx="234" cy="155" r="11.4" fill="#e8175d"/><text x="230.5" y="157" font-family="Liberation Serif" font-size="6" fill="#f0d0dc" textLength="7" lengthAdjust="spacingAndGlyphs">f()</text><circle cx="395" cy="155" r="11.4" fill="#e8175d"/><text x="391.5" y="157" font-family="Liberation Serif" font-size="6" fill="#f0d0dc" textLength="7" lengthAdjust="spacingAndGlyphs">f()</text><circle cx="450" cy="218" r="11.4" fill="#e8175d"/><text x="446.5" y="220" font-family="Liberation Serif" font-size="6" fill="#f0d0dc" textLength="7" lengthAdjust="spacingAndGlyphs">f()</text><circle cx="543" cy="150" r="11.4" fill="#e8175d"/><text x="539.5" y="152" font-family="Liberation Serif" font-size="6" fill="#f0d0dc" textLength="7" lengthAdjust="spacingAndGlyphs">f()</text><circle cx="595" cy="150" r="11.4" fill="#e8175d"/><text x="591.5" y="152" font-family="Liberation Serif" font-size="6" fill="#f0d0dc" textLength="7" lengthAdjust="spacingAndGlyphs">f()</text><circle cx="451" cy="152" r="11" fill="#6e6e6e"/><text x="447.5" y="154" font-family="Liberation Serif" font-size="6" fill="#f0d0dc" textLength="7" lengthAdjust="spacingAndGlyphs">f()</text><circle cx="452.5" cy="96.5" r="11" fill="#6e6e6e" stroke="#d02828" stroke-width="1.2" stroke-dasharray="2.2,0.8"/><path d="M453.5,85.5 L449.5,93 L455,100.5 L451.5,107.5" fill="none" stroke="#c02020" stroke-width="2.4"/><path d="M453.5,85.5 L449.5,93 L455,100.5 L451.5,107.5" fill="none" stroke="#5a5a5a" stroke-width="0.8"/><path d="M331,143 L342,154 L331,165 L320,154 Z" fill="#e8175d"/><text x="331" y="158" text-anchor="middle" font-family="Liberation Serif" font-size="10" fill="#f0d0da">N</text><text x="334" y="141" text-anchor="middle" font-family="Liberation Serif" font-size="4" fill="#8a8a6a">ɯ(1)</text><path d="M487,136 L505,143 L505,157 L487,164 Z" fill="#e8175d"/><path d="M494.2,138.8 V161.2 M499.6,141 V159" stroke="#6a0a28" stroke-width="1"/><rect x="438.5" y="151" width="3" height="2" fill="#6a6a5a"/><rect x="460.5" y="151" width="3" height="2" fill="#6a6a5a"/><rect x="485.5" y="139" width="3" height="2" fill="#6a6a5a"/><rect x="485.5" y="149" width="3" height="2" fill="#6a6a5a"/><rect x="605.5" y="149" width="3" height="2" fill="#6a6a5a"/></g></svg>
<div class="t" style="left:163.20px;top:213.26px;font-size:24.5px;font-family:'Liberation Sans';font-weight:normal;color:#ff2020;transform:scaleX(0.991);transform-origin:0 0;">1</div>
<div style="position:absolute;left:136px;top:276px;width:619px;height:393px;background:#2f2f2f"></div>
<div style="position:absolute;left:138px;top:281px;width:613px;height:16px;background:#2d2d2d"></div>
<div style="position:absolute;left:138px;top:281px;width:77px;height:16px;background:#333;border-right:1px solid #444;border-top:1px solid #3e3e3e"></div>
<div class="t" style="left:146.00px;top:284.54px;font-size:10px;font-family:'Liberation Sans';font-weight:normal;color:#c8c8c8;transform:scaleX(0.948);transform-origin:0 0;">Debug Output</div>
<div style="position:absolute;left:216px;top:281px;width:51px;height:16px;background:#333;border-right:1px solid #444;border-top:1px solid #3e3e3e"></div>
<div class="t" style="left:222.00px;top:284.54px;font-size:10px;font-family:'Liberation Sans';font-weight:normal;color:#c8c8c8;transform:scaleX(0.900);transform-origin:0 0;">Statistics</div>
<div style="position:absolute;left:268px;top:281px;width:85px;height:16px;background:#333;border-right:1px solid #444;border-top:1px solid #3e3e3e"></div>
<div class="t" style="left:275.00px;top:284.54px;font-size:10px;font-family:'Liberation Sans';font-weight:normal;color:#c8c8c8;transform:scaleX(0.934);transform-origin:0 0;">Analytics Report</div>
<div style="position:absolute;left:353px;top:279px;width:108px;height:18px;background:#3a3a3a;border:1px solid #464646;border-bottom:none"></div>
<div class="t" style="left:360.00px;top:283.54px;font-size:10px;font-family:'Liberation Sans';font-weight:normal;color:#c8c8c8;transform:scaleX(0.921);transform-origin:0 0;">Execution Trace Views</div>
<div style="position:absolute;left:461px;top:281px;width:290px;height:16px;background:#2b2b2b;border-top:1px solid #3c3c3c"></div>
<div style="position:absolute;left:138px;top:297px;width:612px;height:36px;background:#3a3a3a;border:1px solid #454545;border-bottom:none"></div>
<svg width="974" height="669"><path d="M148,306 L160.5,313.3 L148,320.6 Z" fill="#a5a5a5"/><rect x="171.6" y="307" width="4.3" height="12" fill="#a5a5a5"/><rect x="179.3" y="307" width="4.3" height="12" fill="#a5a5a5"/><rect x="190.8" y="302.8" width="21.6" height="21.6" rx="2" fill="#333" stroke="#262626" stroke-width="1"/><rect x="195.3" y="307.2" width="12.8" height="12" fill="#a5a5a5"/><rect x="216.5" y="304" width="1" height="18" fill="#2a2a2a"/><rect x="245.5" y="304" width="1" height="18" fill="#2a2a2a"/><rect x="274.5" y="304" width="1" height="18" fill="#2a2a2a"/><path d="M222.5,308.3 H230" stroke="#9a9a9a" stroke-width="1.4" fill="none"/><path d="M229.2,308 V318.5" stroke="#d87a32" stroke-width="1.4" fill="none"/><rect x="230" y="306.9" width="6.6" height="3.1" rx="0.8" fill="none" stroke="#9a9a9a" stroke-width="1"/><rect x="230" y="311.8" width="6.6" height="3.1" rx="0.8" fill="none" stroke="#9a9a9a" stroke-width="1"/><rect x="230" y="316.6" width="6.6" height="3.1" rx="0.8" fill="none" stroke="#9a9a9a" stroke-width="1"/><rect x="252" y="307.2" width="9" height="4" fill="#f6c200"/><rect x="261.5" y="307.2" width="3" height="4" fill="#909090"/><rect x="264.5" y="307.2" width="2" height="4" fill="#e07a2a"/><rect x="252" y="313.5" width="1.5" height="4" fill="#909090"/><rect x="253.7" y="313.5" width="1.8" height="4" fill="#9ae23a"/><rect x="256" y="313.5" width="4" height="4" fill="#7a7a7a"/><rect x="260.5" y="313.5" width="6" height="4" fill="#7a7a7a"/><path d="M340,311 L347.5,311 L343.75,315 Z" fill="#b0b0b0"/></svg>
<div class="t" style="left:282.50px;top:309.54px;font-size:10px;font-family:'Liberation Sans';font-weight:normal;color:#c0c0c0;transform:scaleX(0.920);transform-origin:0 0;">Thread View</div>
<div style="position:absolute;left:138px;top:333px;width:613px;height:336px;background:#2f2f2f"></div>
<div style="position:absolute;left:140px;top:333px;width:24.3px;height:71.7px;background:#565656"></div>
<div style="position:absolute;left:140px;top:407px;width:24.3px;height:22.8px;background:#565656"></div>
<div style="position:absolute;left:140px;top:431.3px;width:24.3px;height:71.7px;background:#565656"></div>
<div style="position:absolute;left:140px;top:505.4px;width:24.3px;height:137px;background:#565656"></div>
<div style="position:absolute;left:140px;top:645px;width:24.3px;height:20.5px;background:#565656"></div>
<div style="position:absolute;left:164.3px;top:333px;width:571.4px;height:71.7px;background:#1f1f1f"></div>
<div style="position:absolute;left:164.3px;top:407px;width:571.4px;height:22.8px;background:#1f1f1f"></div>
<div style="position:absolute;left:164.3px;top:431.3px;width:571.4px;height:71.7px;background:#1f1f1f"></div>
<div style="position:absolute;left:164.3px;top:505.4px;width:561.7px;height:137px;background:#1f1f1f"></div>
<div style="position:absolute;left:164.3px;top:645px;width:571.4px;height:20.5px;background:#1f1f1f"></div>
<div style="position:absolute;left:138px;top:665.5px;width:600px;height:3.5px;background:#191919"></div>
<div style="position:absolute;left:737.9px;top:333px;width:10.5px;height:336px;background:#353535"></div>
<div style="position:absolute;left:738.5px;top:333.5px;width:9.5px;height:7.5px;background:#3e3e3e;border:1px solid #4a4a4a"></div>
<div style="position:absolute;left:739px;top:342px;width:9px;height:325px;background:#383838;border:1px solid #444"></div>
<svg width="974" height="669"><path d="M740.5,339 L746,339 L743.25,336 Z" fill="#c8c8c8"/></svg>
<div style="position:absolute;left:738.5px;top:660px;width:9.5px;height:9px;background:#3e3e3e;border:1px solid #4a4a4a"></div>
<svg width="974" height="669"><path d="M740.5,663.5 L746,663.5 L743.25,666.5 Z" fill="#c8c8c8"/></svg>
<div style="position:absolute;left:726px;top:505.4px;width:10px;height:137px;background:#2d2d2d;border-left:1px solid #3a3a3a"></div>
<div style="position:absolute;left:726.5px;top:506px;width:9px;height:8px;background:#3a3a3a;border:1px solid #444"></div>
<div style="position:absolute;left:726.5px;top:634px;width:9px;height:8px;background:#3a3a3a;border:1px solid #444"></div>
<div style="position:absolute;left:727px;top:514.5px;width:8px;height:119px;background:#383838"></div>
<svg width="974" height="669"><path d="M728.5,512 L733.5,512 L731,509 Z" fill="#c8c8c8"/><path d="M728.5,636.5 L733.5,636.5 L731,639.5 Z" fill="#c8c8c8"/></svg>
<div class="t" style="left:131.15px;top:364.80px;width:56.69px;height:10px;font-size:10px;color:#9c9c9c;transform:rotate(-90deg) scaleX(0.917);transform-origin:50% 50%;text-align:center">Concurrency</div>
<div class="t" style="left:148.57px;top:414.00px;width:21.85px;height:10px;font-size:10px;color:#9c9c9c;transform:rotate(-90deg) scaleX(0.915);transform-origin:50% 50%;text-align:center">Time</div>
<div class="t" style="left:144.22px;top:462.60px;width:30.57px;height:10px;font-size:10px;color:#9c9c9c;transform:rotate(-90deg) scaleX(0.916);transform-origin:50% 50%;text-align:center">Details</div>
<div class="t" style="left:128.99px;top:568.80px;width:61.02px;height:9px;font-size:9px;color:#9c9c9c;transform:rotate(-90deg) scaleX(1.033);transform-origin:50% 50%;text-align:center">Over-time Data</div>
<div class="t" style="left:148.57px;top:650.50px;width:21.85px;height:10px;font-size:10px;color:#9c9c9c;transform:rotate(-90deg) scaleX(0.915);transform-origin:50% 50%;text-align:center">Time</div>
<div class="t" style="left:192.65px;top:367.40px;width:23.91px;height:10px;font-size:10px;color:#c8c8c8;transform:rotate(-90deg) scaleX(0.983);transform-origin:50% 50%;text-align:center">Node</div>
<div class="t" style="left:188.95px;top:353.20px;width:56.69px;height:10px;font-size:10px;color:#c8c8c8;transform:rotate(-90deg) scaleX(0.917);transform-origin:50% 50%;text-align:center">Concurrency</div>
<div class="t" style="left:192.65px;top:483.60px;width:23.91px;height:10px;font-size:10px;color:#c8c8c8;transform:rotate(-90deg) scaleX(0.983);transform-origin:50% 50%;text-align:center">Node</div>
<div class="t" style="left:189.25px;top:468.80px;width:56.69px;height:10px;font-size:10px;color:#c8c8c8;transform:rotate(-90deg) scaleX(0.935);transform-origin:50% 50%;text-align:center">Concurrency</div>
<svg width="974" height="669"><path d="M222.90,385 V354.4 H225.10 V348.6 H226.40 V354.4 H231.10 V360.1 H241.50 V385 Z" fill="#2a3626"/><rect x="241.50" y="378" width="6.5" height="7" fill="#4a2323"/><path d="M248.00,385 V354.4 H250.20 V348.6 H251.50 V354.4 H256.20 V360.1 H266.60 V385 Z" fill="#2a3626"/><rect x="266.60" y="378" width="6.5" height="7" fill="#4a2323"/><path d="M273.10,385 V354.4 H275.30 V348.6 H276.60 V354.4 H281.30 V360.1 H291.70 V385 Z" fill="#2a3626"/><rect x="291.70" y="378" width="6.5" height="7" fill="#4a2323"/><path d="M298.20,385 V354.4 H300.40 V348.6 H301.70 V354.4 H306.40 V360.1 H316.80 V385 Z" fill="#2a3626"/><rect x="316.80" y="378" width="6.5" height="7" fill="#4a2323"/><path d="M323.30,385 V354.4 H325.50 V348.6 H326.80 V354.4 H331.50 V360.1 H341.90 V385 Z" fill="#2a3626"/><rect x="341.90" y="378" width="6.5" height="7" fill="#4a2323"/><path d="M348.40,385 V354.4 H350.60 V348.6 H351.90 V354.4 H356.60 V360.1 H367.00 V385 Z" fill="#2a3626"/><rect x="367.00" y="378" width="6.5" height="7" fill="#4a2323"/><path d="M373.50,385 V354.4 H375.70 V348.6 H377.00 V354.4 H381.70 V360.1 H392.10 V385 Z" fill="#2a3626"/><rect x="392.10" y="378" width="6.5" height="7" fill="#4a2323"/><path d="M398.60,385 V354.4 H400.80 V348.6 H402.10 V354.4 H406.80 V360.1 H417.20 V385 Z" fill="#2a3626"/><rect x="417.20" y="378" width="6.5" height="7" fill="#4a2323"/><path d="M423.70,385 V354.4 H425.90 V348.6 H427.20 V354.4 H431.90 V360.1 H442.30 V385 Z" fill="#2a3626"/><rect x="442.30" y="378" width="6.5" height="7" fill="#4a2323"/><rect x="444.8" y="378" width="4.5" height="7" fill="#c02a2a"/><rect x="447.8" y="363" width="1" height="15" fill="#b02a2a"/><path d="M448.80,385 V354.4 H451.00 V348.6 H452.30 V354.4 H457.00 V360.1 H467.40 V385 Z" fill="#4a7a3a"/><rect x="467.40" y="378" width="6.5" height="7" fill="#c02a2a"/><path d="M473.90,385 V354.4 H476.10 V348.6 H477.40 V354.4 H482.10 V360.1 H492.50 V385 Z" fill="#2a3626"/><rect x="492.50" y="378" width="6.5" height="7" fill="#4a2323"/><path d="M499.00,385 V354.4 H501.20 V348.6 H502.50 V354.4 H507.20 V360.1 H517.60 V385 Z" fill="#2a3626"/><rect x="517.60" y="378" width="6.5" height="7" fill="#4a2323"/><path d="M524.10,385 V354.4 H526.30 V348.6 H527.60 V354.4 H532.30 V360.1 H542.70 V385 Z" fill="#2a3626"/><rect x="542.70" y="378" width="6.5" height="7" fill="#4a2323"/><path d="M549.20,385 V354.4 H551.40 V348.6 H552.70 V354.4 H557.40 V360.1 H567.80 V385 Z" fill="#2a3626"/><rect x="567.80" y="378" width="6.5" height="7" fill="#4a2323"/><path d="M574.30,385 V354.4 H576.50 V348.6 H577.80 V354.4 H582.50 V360.1 H592.90 V385 Z" fill="#2a3626"/><rect x="592.90" y="378" width="6.5" height="7" fill="#4a2323"/><path d="M599.40,385 V354.4 H601.60 V348.6 H602.90 V354.4 H607.60 V360.1 H618.00 V385 Z" fill="#2a3626"/><rect x="618.00" y="378" width="6.5" height="7" fill="#4a2323"/><path d="M624.50,385 V354.4 H626.70 V348.6 H628.00 V354.4 H632.70 V360.1 H643.10 V385 Z" fill="#2a3626"/><rect x="643.10" y="378" width="6.5" height="7" fill="#4a2323"/><path d="M649.60,385 V354.4 H651.80 V348.6 H653.10 V354.4 H657.80 V360.1 H668.20 V385 Z" fill="#2a3626"/><rect x="668.20" y="378" width="6.5" height="7" fill="#4a2323"/><path d="M674.70,385 V354.4 H676.90 V348.6 H678.20 V354.4 H682.90 V360.1 H693.30 V385 Z" fill="#2a3626"/><rect x="693.30" y="378" width="6.5" height="7" fill="#4a2323"/><path d="M699.80,385 V354.4 H702.00 V348.6 H703.30 V354.4 H708.00 V360.1 H718.40 V385 Z" fill="#2a3626"/><rect x="718.40" y="378" width="6.5" height="7" fill="#4a2323"/><rect x="222.5" y="385" width="203" height="1.5" fill="#c4c4c4"/><rect x="222.5" y="385" width="503" height="1.5" fill="#c4c4c4"/><rect x="222.5" y="385" width="1.5" height="4.5" fill="#c4c4c4"/><rect x="724.2" y="385" width="1.5" height="5" fill="#c4c4c4"/><rect x="436.7" y="352.7" width="40.6" height="36.1" fill="none" stroke="#ffffff" stroke-width="2"/><rect x="209.40" y="407" width="1.2" height="4.7" fill="#a0a0a0"/><rect x="209.40" y="425" width="1.2" height="5" fill="#a0a0a0"/><rect x="220.77" y="407" width="1.2" height="2" fill="#8a8a8a"/><rect x="220.77" y="427.7" width="1.2" height="2.2" fill="#8a8a8a"/><rect x="231.95" y="407" width="1.2" height="2" fill="#8a8a8a"/><rect x="231.95" y="427.7" width="1.2" height="2.2" fill="#8a8a8a"/><rect x="243.12" y="407" width="1.2" height="2" fill="#8a8a8a"/><rect x="243.12" y="427.7" width="1.2" height="2.2" fill="#8a8a8a"/><rect x="254.29" y="407" width="1.2" height="2" fill="#8a8a8a"/><rect x="254.29" y="427.7" width="1.2" height="2.2" fill="#8a8a8a"/><rect x="265.26" y="407" width="1.2" height="4.7" fill="#a0a0a0"/><rect x="265.26" y="425" width="1.2" height="5" fill="#a0a0a0"/><rect x="276.64" y="407" width="1.2" height="2" fill="#8a8a8a"/><rect x="276.64" y="427.7" width="1.2" height="2.2" fill="#8a8a8a"/><rect x="287.81" y="407" width="1.2" height="2" fill="#8a8a8a"/><rect x="287.81" y="427.7" width="1.2" height="2.2" fill="#8a8a8a"/><rect x="298.98" y="407" width="1.2" height="2" fill="#8a8a8a"/><rect x="298.98" y="427.7" width="1.2" height="2.2" fill="#8a8a8a"/><rect x="310.16" y="407" width="1.2" height="2" fill="#8a8a8a"/><rect x="310.16" y="427.7" width="1.2" height="2.2" fill="#8a8a8a"/><rect x="321.13" y="407" width="1.2" height="4.7" fill="#a0a0a0"/><rect x="321.13" y="425" width="1.2" height="5" fill="#a0a0a0"/><rect x="332.50" y="407" width="1.2" height="2" fill="#8a8a8a"/><rect x="332.50" y="427.7" width="1.2" height="2.2" fill="#8a8a8a"/><rect x="343.68" y="407" width="1.2" height="2" fill="#8a8a8a"/><rect x="343.68" y="427.7" width="1.2" height="2.2" fill="#8a8a8a"/><rect x="354.85" y="407" width="1.2" height="2" fill="#8a8a8a"/><rect x="354.85" y="427.7" width="1.2" height="2.2" fill="#8a8a8a"/><rect x="366.02" y="407" width="1.2" height="2" fill="#8a8a8a"/><rect x="366.02" y="427.7" width="1.2" height="2.2" fill="#8a8a8a"/><rect x="376.99" y="407" width="1.2" height="4.7" fill="#a0a0a0"/><rect x="376.99" y="425" width="1.2" height="5" fill="#a0a0a0"/><rect x="388.37" y="407" width="1.2" height="2" fill="#8a8a8a"/><rect x="388.37" y="427.7" width="1.2" height="2.2" fill="#8a8a8a"/><rect x="399.54" y="407" width="1.2" height="2" fill="#8a8a8a"/><rect x="399.54" y="427.7" width="1.2" height="2.2" fill="#8a8a8a"/><rect x="410.71" y="407" width="1.2" height="2" fill="#8a8a8a"/><rect x="410.71" y="427.7" width="1.2" height="2.2" fill="#8a8a8a"/><rect x="421.89" y="407" width="1.2" height="2" fill="#8a8a8a"/><rect x="421.89" y="427.7" width="1.2" height="2.2" fill="#8a8a8a"/><rect x="432.86" y="407" width="1.2" height="4.7" fill="#a0a0a0"/><rect x="432.86" y="425" width="1.2" height="5" fill="#a0a0a0"/><rect x="444.23" y="407" width="1.2" height="2" fill="#8a8a8a"/><rect x="444.23" y="427.7" width="1.2" height="2.2" fill="#8a8a8a"/><rect x="455.41" y="407" width="1.2" height="2" fill="#8a8a8a"/><rect x="455.41" y="427.7" width="1.2" height="2.2" fill="#8a8a8a"/><rect x="466.58" y="407" width="1.2" height="2" fill="#8a8a8a"/><rect x="466.58" y="427.7" width="1.2" height="2.2" fill="#8a8a8a"/><rect x="477.75" y="407" width="1.2" height="2" fill="#8a8a8a"/><rect x="477.75" y="427.7" width="1.2" height="2.2" fill="#8a8a8a"/><rect x="488.72" y="407" width="1.2" height="4.7" fill="#a0a0a0"/><rect x="488.72" y="425" width="1.2" height="5" fill="#a0a0a0"/><rect x="500.10" y="407" width="1.2" height="2" fill="#8a8a8a"/><rect x="500.10" y="427.7" width="1.2" height="2.2" fill="#8a8a8a"/><rect x="511.27" y="407" width="1.2" height="2" fill="#8a8a8a"/><rect x="511.27" y="427.7" width="1.2" height="2.2" fill="#8a8a8a"/><rect x="522.44" y="407" width="1.2" height="2" fill="#8a8a8a"/><rect x="522.44" y="427.7" width="1.2" height="2.2" fill="#8a8a8a"/><rect x="533.62" y="407" width="1.2" height="2" fill="#8a8a8a"/><rect x="533.62" y="427.7" width="1.2" height="2.2" fill="#8a8a8a"/><rect x="544.59" y="407" width="1.2" height="4.7" fill="#a0a0a0"/><rect x="544.59" y="425" width="1.2" height="5" fill="#a0a0a0"/><rect x="555.96" y="407" width="1.2" height="2" fill="#8a8a8a"/><rect x="555.96" y="427.7" width="1.2" height="2.2" fill="#8a8a8a"/><rect x="567.14" y="407" width="1.2" height="2" fill="#8a8a8a"/><rect x="567.14" y="427.7" width="1.2" height="2.2" fill="#8a8a8a"/><rect x="578.31" y="407" width="1.2" height="2" fill="#8a8a8a"/><rect x="578.31" y="427.7" width="1.2" height="2.2" fill="#8a8a8a"/><rect x="589.48" y="407" width="1.2" height="2" fill="#8a8a8a"/><rect x="589.48" y="427.7" width="1.2" height="2.2" fill="#8a8a8a"/><rect x="600.46" y="407" width="1.2" height="4.7" fill="#a0a0a0"/><rect x="600.46" y="425" width="1.2" height="5" fill="#a0a0a0"/><rect x="611.83" y="407" width="1.2" height="2" fill="#8a8a8a"/><rect x="611.83" y="427.7" width="1.2" height="2.2" fill="#8a8a8a"/><rect x="623.00" y="407" width="1.2" height="2" fill="#8a8a8a"/><rect x="623.00" y="427.7" width="1.2" height="2.2" fill="#8a8a8a"/><rect x="634.17" y="407" width="1.2" height="2" fill="#8a8a8a"/><rect x="634.17" y="427.7" width="1.2" height="2.2" fill="#8a8a8a"/><rect x="645.35" y="407" width="1.2" height="2" fill="#8a8a8a"/><rect x="645.35" y="427.7" width="1.2" height="2.2" fill="#8a8a8a"/><rect x="656.32" y="407" width="1.2" height="4.7" fill="#a0a0a0"/><rect x="656.32" y="425" width="1.2" height="5" fill="#a0a0a0"/><rect x="667.69" y="407" width="1.2" height="2" fill="#8a8a8a"/><rect x="667.69" y="427.7" width="1.2" height="2.2" fill="#8a8a8a"/><rect x="678.87" y="407" width="1.2" height="2" fill="#8a8a8a"/><rect x="678.87" y="427.7" width="1.2" height="2.2" fill="#8a8a8a"/><rect x="690.04" y="407" width="1.2" height="2" fill="#8a8a8a"/><rect x="690.04" y="427.7" width="1.2" height="2.2" fill="#8a8a8a"/><rect x="701.21" y="407" width="1.2" height="2" fill="#8a8a8a"/><rect x="701.21" y="427.7" width="1.2" height="2.2" fill="#8a8a8a"/><rect x="712.19" y="407" width="1.2" height="4.7" fill="#a0a0a0"/><rect x="712.19" y="425" width="1.2" height="5" fill="#a0a0a0"/><rect x="723.56" y="407" width="1.2" height="2" fill="#8a8a8a"/><rect x="723.56" y="427.7" width="1.2" height="2.2" fill="#8a8a8a"/><rect x="209.40" y="645" width="1.2" height="2.5" fill="#a0a0a0"/><rect x="209.40" y="661" width="1.2" height="5" fill="#a0a0a0"/><rect x="220.77" y="663.7" width="1.2" height="2.2" fill="#8a8a8a"/><rect x="231.95" y="663.7" width="1.2" height="2.2" fill="#8a8a8a"/><rect x="243.12" y="663.7" width="1.2" height="2.2" fill="#8a8a8a"/><rect x="254.29" y="663.7" width="1.2" height="2.2" fill="#8a8a8a"/><rect x="265.26" y="645" width="1.2" height="2.5" fill="#a0a0a0"/><rect x="265.26" y="661" width="1.2" height="5" fill="#a0a0a0"/><rect x="276.64" y="663.7" width="1.2" height="2.2" fill="#8a8a8a"/><rect x="287.81" y="663.7" width="1.2" height="2.2" fill="#8a8a8a"/><rect x="298.98" y="663.7" width="1.2" height="2.2" fill="#8a8a8a"/><rect x="310.16" y="663.7" width="1.2" height="2.2" fill="#8a8a8a"/><rect x="321.13" y="645" width="1.2" height="2.5" fill="#a0a0a0"/><rect x="321.13" y="661" width="1.2" height="5" fill="#a0a0a0"/><rect x="332.50" y="663.7" width="1.2" height="2.2" fill="#8a8a8a"/><rect x="343.68" y="663.7" width="1.2" height="2.2" fill="#8a8a8a"/><rect x="354.85" y="663.7" width="1.2" height="2.2" fill="#8a8a8a"/><rect x="366.02" y="663.7" width="1.2" height="2.2" fill="#8a8a8a"/><rect x="376.99" y="645" width="1.2" height="2.5" fill="#a0a0a0"/><rect x="376.99" y="661" width="1.2" height="5" fill="#a0a0a0"/><rect x="388.37" y="663.7" width="1.2" height="2.2" fill="#8a8a8a"/><rect x="399.54" y="663.7" width="1.2" height="2.2" fill="#8a8a8a"/><rect x="410.71" y="663.7" width="1.2" height="2.2" fill="#8a8a8a"/><rect x="421.89" y="663.7" width="1.2" height="2.2" fill="#8a8a8a"/><rect x="432.86" y="645" width="1.2" height="2.5" fill="#a0a0a0"/><rect x="432.86" y="661" width="1.2" height="5" fill="#a0a0a0"/><rect x="444.23" y="663.7" width="1.2" height="2.2" fill="#8a8a8a"/><rect x="455.41" y="663.7" width="1.2" height="2.2" fill="#8a8a8a"/><rect x="466.58" y="663.7" width="1.2" height="2.2" fill="#8a8a8a"/><rect x="477.75" y="663.7" width="1.2" height="2.2" fill="#8a8a8a"/><rect x="488.72" y="645" width="1.2" height="2.5" fill="#a0a0a0"/><rect x="488.72" y="661" width="1.2" height="5" fill="#a0a0a0"/><rect x="500.10" y="663.7" width="1.2" height="2.2" fill="#8a8a8a"/><rect x="511.27" y="663.7" width="1.2" height="2.2" fill="#8a8a8a"/><rect x="522.44" y="663.7" width="1.2" height="2.2" fill="#8a8a8a"/><rect x="533.62" y="663.7" width="1.2" height="2.2" fill="#8a8a8a"/><rect x="544.59" y="645" width="1.2" height="2.5" fill="#a0a0a0"/><rect x="544.59" y="661" width="1.2" height="5" fill="#a0a0a0"/><rect x="555.96" y="663.7" width="1.2" height="2.2" fill="#8a8a8a"/><rect x="567.14" y="663.7" width="1.2" height="2.2" fill="#8a8a8a"/><rect x="578.31" y="663.7" width="1.2" height="2.2" fill="#8a8a8a"/><rect x="589.48" y="663.7" width="1.2" height="2.2" fill="#8a8a8a"/><rect x="600.46" y="645" width="1.2" height="2.5" fill="#a0a0a0"/><rect x="600.46" y="661" width="1.2" height="5" fill="#a0a0a0"/><rect x="611.83" y="663.7" width="1.2" height="2.2" fill="#8a8a8a"/><rect x="623.00" y="663.7" width="1.2" height="2.2" fill="#8a8a8a"/><rect x="634.17" y="663.7" width="1.2" height="2.2" fill="#8a8a8a"/><rect x="645.35" y="663.7" width="1.2" height="2.2" fill="#8a8a8a"/><rect x="656.32" y="645" width="1.2" height="2.5" fill="#a0a0a0"/><rect x="656.32" y="661" width="1.2" height="5" fill="#a0a0a0"/><rect x="667.69" y="663.7" width="1.2" height="2.2" fill="#8a8a8a"/><rect x="678.87" y="663.7" width="1.2" height="2.2" fill="#8a8a8a"/><rect x="690.04" y="663.7" width="1.2" height="2.2" fill="#8a8a8a"/><rect x="701.21" y="663.7" width="1.2" height="2.2" fill="#8a8a8a"/><rect x="712.19" y="645" width="1.2" height="2.5" fill="#a0a0a0"/><rect x="712.19" y="661" width="1.2" height="5" fill="#a0a0a0"/><rect x="723.56" y="663.7" width="1.2" height="2.2" fill="#8a8a8a"/><rect x="222" y="489" width="75.3" height="11" fill="#9e3333"/><path d="M297.3,500 V445 H436.3 V456 H626.3 V500 Z" fill="#4c6a3e"/><rect x="626.3" y="489" width="98.5" height="11" fill="#9e3333"/><rect x="222" y="500" width="503" height="1.5" fill="#9a9a9a"/><rect x="341.8" y="434" width="1" height="11" fill="#4a9a3a"/><rect x="296.8" y="473" width="1" height="16" fill="#b08020"/><rect x="164.3" y="518.42" width="561.7" height="0.9" fill="#363636"/><rect x="164.3" y="532.14" width="561.7" height="0.9" fill="#363636"/><rect x="164.3" y="545.86" width="561.7" height="0.9" fill="#363636"/><rect x="164.3" y="559.58" width="561.7" height="0.9" fill="#363636"/><rect x="164.3" y="573.30" width="561.7" height="0.9" fill="#363636"/><rect x="164.3" y="587.02" width="561.7" height="0.9" fill="#363636"/><rect x="164.3" y="600.74" width="561.7" height="0.9" fill="#363636"/><rect x="164.3" y="614.46" width="561.7" height="0.9" fill="#363636"/><rect x="164.3" y="628.18" width="561.7" height="0.9" fill="#363636"/><rect x="164.3" y="641.90" width="561.7" height="0.9" fill="#363636"/><rect x="221.8" y="505.4" width="0.8" height="137" fill="#363636"/><rect x="222.6" y="506.4" width="502.5" height="11.9" fill="#6b2c31"/><rect x="291" y="506.4" width="6.3" height="11.9" fill="#8e4650"/><rect x="297.3" y="533" width="139" height="13.2" fill="#6b2c31"/><rect x="297.3" y="547.2" width="328.8" height="12.6" fill="#0a8cff"/><rect x="297.3" y="588.0" width="328.8" height="12.6" fill="#0a8cff"/><rect x="297.3" y="614.8" width="328.8" height="12.6" fill="#0a8cff"/><rect x="297.3" y="628.8" width="44.5" height="12.6" fill="#1f3552"/><rect x="297" y="539" width="1.1" height="96" fill="#46b046"/><rect x="341.5" y="573.5" width="1.1" height="61" fill="#46b046"/><rect x="341.5" y="573.5" width="1.1" height="6" fill="#b07090"/></svg>
<div class="t" style="left:424.50px;top:337.38px;font-size:9px;font-family:'Liberation Sans';font-weight:bold;color:#c8c8c8;transform:scaleX(1.010);transform-origin:0 0;">Concurrency Overview</div>
<div class="t" style="left:222.30px;top:392.78px;font-size:9px;font-family:'Liberation Sans';font-weight:normal;color:#c0c0c0;transform:scaleX(0.999);transform-origin:0 0;">0</div>
<div class="t" style="left:464.00px;top:392.78px;font-size:9px;font-family:'Liberation Sans';font-weight:normal;color:#b0b0b0;transform:scaleX(1.017);transform-origin:0 0;">Time</div>
<div class="t" style="left:691.20px;top:392.78px;font-size:9px;font-family:'Liberation Sans';font-weight:normal;color:#c0c0c0;transform:scaleX(0.997);transform-origin:0 0;">804.4ms</div>
<div class="t" style="left:196.70px;top:414.98px;font-size:9px;font-family:'Liberation Sans';font-weight:normal;color:#c4c4c4;transform:scaleX(0.999);transform-origin:0 0;">355ms</div>
<div class="t" style="left:196.70px;top:650.78px;font-size:9px;font-family:'Liberation Sans';font-weight:normal;color:#c4c4c4;transform:scaleX(0.999);transform-origin:0 0;">355ms</div>
<div class="t" style="left:252.56px;top:414.98px;font-size:9px;font-family:'Liberation Sans';font-weight:normal;color:#c4c4c4;transform:scaleX(0.999);transform-origin:0 0;">360ms</div>
<div class="t" style="left:252.56px;top:650.78px;font-size:9px;font-family:'Liberation Sans';font-weight:normal;color:#c4c4c4;transform:scaleX(0.999);transform-origin:0 0;">360ms</div>
<div class="t" style="left:308.43px;top:414.98px;font-size:9px;font-family:'Liberation Sans';font-weight:normal;color:#c4c4c4;transform:scaleX(0.999);transform-origin:0 0;">365ms</div>
<div class="t" style="left:308.43px;top:650.78px;font-size:9px;font-family:'Liberation Sans';font-weight:normal;color:#c4c4c4;transform:scaleX(0.999);transform-origin:0 0;">365ms</div>
<div class="t" style="left:364.29px;top:414.98px;font-size:9px;font-family:'Liberation Sans';font-weight:normal;color:#c4c4c4;transform:scaleX(0.999);transform-origin:0 0;">370ms</div>
<div class="t" style="left:364.29px;top:650.78px;font-size:9px;font-family:'Liberation Sans';font-weight:normal;color:#c4c4c4;transform:scaleX(0.999);transform-origin:0 0;">370ms</div>
<div class="t" style="left:420.16px;top:414.98px;font-size:9px;font-family:'Liberation Sans';font-weight:normal;color:#c4c4c4;transform:scaleX(0.999);transform-origin:0 0;">375ms</div>
<div class="t" style="left:420.16px;top:650.78px;font-size:9px;font-family:'Liberation Sans';font-weight:normal;color:#c4c4c4;transform:scaleX(0.999);transform-origin:0 0;">375ms</div>
<div class="t" style="left:476.02px;top:414.98px;font-size:9px;font-family:'Liberation Sans';font-weight:normal;color:#c4c4c4;transform:scaleX(0.999);transform-origin:0 0;">380ms</div>
<div class="t" style="left:476.02px;top:650.78px;font-size:9px;font-family:'Liberation Sans';font-weight:normal;color:#c4c4c4;transform:scaleX(0.999);transform-origin:0 0;">380ms</div>
<div class="t" style="left:531.89px;top:414.98px;font-size:9px;font-family:'Liberation Sans';font-weight:normal;color:#c4c4c4;transform:scaleX(0.999);transform-origin:0 0;">385ms</div>
<div class="t" style="left:531.89px;top:650.78px;font-size:9px;font-family:'Liberation Sans';font-weight:normal;color:#c4c4c4;transform:scaleX(0.999);transform-origin:0 0;">385ms</div>
<div class="t" style="left:587.75px;top:414.98px;font-size:9px;font-family:'Liberation Sans';font-weight:normal;color:#c4c4c4;transform:scaleX(0.999);transform-origin:0 0;">390ms</div>
<div class="t" style="left:587.75px;top:650.78px;font-size:9px;font-family:'Liberation Sans';font-weight:normal;color:#c4c4c4;transform:scaleX(0.999);transform-origin:0 0;">390ms</div>
<div class="t" style="left:643.62px;top:414.98px;font-size:9px;font-family:'Liberation Sans';font-weight:normal;color:#c4c4c4;transform:scaleX(0.999);transform-origin:0 0;">395ms</div>
<div class="t" style="left:643.62px;top:650.78px;font-size:9px;font-family:'Liberation Sans';font-weight:normal;color:#c4c4c4;transform:scaleX(0.999);transform-origin:0 0;">395ms</div>
<div class="t" style="left:699.49px;top:414.98px;font-size:9px;font-family:'Liberation Sans';font-weight:normal;color:#c4c4c4;transform:scaleX(0.999);transform-origin:0 0;">400ms</div>
<div class="t" style="left:699.49px;top:650.78px;font-size:9px;font-family:'Liberation Sans';font-weight:normal;color:#c4c4c4;transform:scaleX(0.999);transform-origin:0 0;">400ms</div>
<div style="position:absolute;left:164.3px;top:412px;width:44.5px;height:12.5px;background:#1f1f1f"></div>
<div style="position:absolute;left:164.3px;top:648px;width:44.5px;height:12.5px;background:#1f1f1f"></div>
<div class="t" style="left:175.10px;top:507.94px;font-size:10px;font-family:'Liberation Sans';font-weight:normal;color:#d0d0d0;transform:scaleX(0.942);transform-origin:0 0;">Thread 0</div>
<div class="t" style="left:175.10px;top:521.65px;font-size:10px;font-family:'Liberation Sans';font-weight:normal;color:#d0d0d0;transform:scaleX(0.942);transform-origin:0 0;">Thread 1</div>
<div class="t" style="left:175.10px;top:535.38px;font-size:10px;font-family:'Liberation Sans';font-weight:normal;color:#d0d0d0;transform:scaleX(0.942);transform-origin:0 0;">Thread 2</div>
<div class="t" style="left:175.10px;top:549.09px;font-size:10px;font-family:'Liberation Sans';font-weight:normal;color:#d0d0d0;transform:scaleX(0.942);transform-origin:0 0;">Thread 3</div>
<div class="t" style="left:175.10px;top:562.81px;font-size:10px;font-family:'Liberation Sans';font-weight:normal;color:#d0d0d0;transform:scaleX(0.942);transform-origin:0 0;">Thread 4</div>
<div class="t" style="left:175.10px;top:576.53px;font-size:10px;font-family:'Liberation Sans';font-weight:normal;color:#d0d0d0;transform:scaleX(0.942);transform-origin:0 0;">Thread 5</div>
<div class="t" style="left:175.10px;top:590.25px;font-size:10px;font-family:'Liberation Sans';font-weight:normal;color:#d0d0d0;transform:scaleX(0.942);transform-origin:0 0;">Thread 6</div>
<div class="t" style="left:175.10px;top:603.97px;font-size:10px;font-family:'Liberation Sans';font-weight:normal;color:#d0d0d0;transform:scaleX(0.942);transform-origin:0 0;">Thread 7</div>
<div class="t" style="left:175.10px;top:617.69px;font-size:10px;font-family:'Liberation Sans';font-weight:normal;color:#d0d0d0;transform:scaleX(0.942);transform-origin:0 0;">Thread 8</div>
<div class="t" style="left:181.30px;top:631.41px;font-size:10px;font-family:'Liberation Sans';font-weight:normal;color:#d0d0d0;transform:scaleX(0.870);transform-origin:0 0;">Async</div>
<div class="t" style="left:488.00px;top:508.14px;font-size:10px;font-family:'Liberation Sans';font-weight:normal;color:#3a1a1c;transform:scaleX(0.909);transform-origin:0 0;">CV_nested</div>
<div class="t" style="left:348.00px;top:535.33px;font-size:10px;font-family:'Liberation Sans';font-weight:normal;color:#3a1a1c;transform:scaleX(0.877);transform-origin:0 0;">CV_serial</div>
<div class="t" style="left:430.00px;top:548.83px;font-size:10px;font-family:'Liberation Sans';font-weight:normal;color:#0a2a55;transform:scaleX(0.878);transform-origin:0 0;">CV_nested::p49</div>
<div class="t" style="left:430.00px;top:590.03px;font-size:10px;font-family:'Liberation Sans';font-weight:normal;color:#0a2a55;transform:scaleX(0.878);transform-origin:0 0;">CV_nested::p49</div>
<div class="t" style="left:430.00px;top:616.53px;font-size:10px;font-family:'Liberation Sans';font-weight:normal;color:#0a2a55;transform:scaleX(0.878);transform-origin:0 0;">CV_nested::p49</div>
<div class="t" style="left:177.30px;top:343.39px;font-size:26px;font-family:'Liberation Sans';font-weight:normal;color:#ff2020;transform:scaleX(0.934);transform-origin:0 0;">2</div>
<div class="t" style="left:432.70px;top:395.39px;font-size:26px;font-family:'Liberation Sans';font-weight:normal;color:#ffffff;transform:scaleX(0.978);transform-origin:0 0;">Zoom</div>
<div style="position:absolute;left:753px;top:49px;width:221px;height:620px;background:#2f2f2f"></div>
<div style="position:absolute;left:753px;top:49px;width:221px;height:1px;background:#3a3a3a"></div>
<div style="position:absolute;left:754.6px;top:55px;width:58.6px;height:19px;background:#3a3a3a;border:1px solid #474747;border-bottom:none;border-radius:2px 2px 0 0"></div>
<div class="t" style="left:762.00px;top:60.53px;font-size:10px;font-family:'Liberation Sans';font-weight:normal;color:#c8c8c8;transform:scaleX(0.965);transform-origin:0 0;">Properties</div>
<div style="position:absolute;left:813px;top:56px;width:157px;height:18px;background:#2c2c2c;border-top:1px solid #393939"></div>
<div style="position:absolute;left:754px;top:74px;width:216px;height:595px;background:#383838;border:1px solid #444"></div>
<div style="position:absolute;left:757px;top:78px;width:88.4px;height:19px;background:#333;border:1px solid #454545;border-bottom:none;border-radius:2px 2px 0 0"></div>
<div class="t" style="left:765.00px;top:83.53px;font-size:10px;font-family:'Liberation Sans';font-weight:normal;color:#c0c0c0;transform:scaleX(0.946);transform-origin:0 0;">Graph Properties</div>
<div style="position:absolute;left:846.6px;top:76.7px;width:85.1px;height:20.5px;background:#3c3c3c;border:1px solid #4a4a4a;border-bottom:none;border-radius:2px 2px 0 0"></div>
<div class="t" style="left:854.60px;top:82.53px;font-size:10px;font-family:'Liberation Sans';font-weight:normal;color:#c8c8c8;transform:scaleX(0.962);transform-origin:0 0;">Node Properties</div>
<div style="position:absolute;left:932px;top:78px;width:36px;height:19px;background:#333"></div>
<div style="position:absolute;left:757px;top:97px;width:211px;height:210px;background:#353535;border:1px solid #454545"></div>
<div style="position:absolute;left:760px;top:99.7px;width:195px;height:13px;background:#2e2e2e"></div>
<div style="position:absolute;left:831.3px;top:100.5px;width:1px;height:11.5px;background:#444"></div>
<div class="t" style="left:761.00px;top:102.56px;font-size:9.5px;font-family:'Liberation Sans';font-weight:normal;color:#c8c8c8;transform:scaleX(0.916);transform-origin:0 0;">Property Name</div>
<div class="t" style="left:833.50px;top:102.56px;font-size:9.5px;font-family:'Liberation Sans';font-weight:normal;color:#c8c8c8;transform:scaleX(0.890);transform-origin:0 0;">Value</div>
<div style="position:absolute;left:760px;top:112.5px;width:195px;height:13.75px;background:#141414"></div>
<svg width="974" height="669"><path d="M764.3,118.70 L770.5,118.70 L767.4,122.10 Z" fill="#b8b8b8"/></svg>
<div class="t" style="left:775.00px;top:115.63px;font-size:10px;font-family:'Liberation Sans';font-weight:normal;color:#c8c8c8;transform:scaleX(0.870);transform-origin:0 0;">Global</div>
<div style="position:absolute;left:760px;top:126.25px;width:195px;height:13.75px;background:#2a2a2a"></div>
<div class="t" style="left:791.00px;top:129.38px;font-size:10px;font-family:'Liberation Sans';font-weight:normal;color:#d0d0d0;transform:scaleX(0.870);transform-origin:0 0;">Graphm...</div>
<div class="t" style="left:834.80px;top:130.19px;font-size:10px;font-family:'Liberation Mono';font-weight:normal;color:#d0d0d0;transform:scaleX(0.942);transform-origin:0 0;">g0::n2</div>
<div style="position:absolute;left:760px;top:140.0px;width:195px;height:13.75px;background:#141414"></div>
<div class="t" style="left:791.00px;top:143.13px;font-size:10px;font-family:'Liberation Sans';font-weight:normal;color:#d0d0d0;transform:scaleX(0.870);transform-origin:0 0;">Node T...</div>
<div class="t" style="left:834.80px;top:143.94px;font-size:10px;font-family:'Liberation Mono';font-weight:normal;color:#d0d0d0;transform:scaleX(0.942);transform-origin:0 0;">async_node</div>
<div style="position:absolute;left:760px;top:153.75px;width:195px;height:13.75px;background:#2a2a2a"></div>
<div class="t" style="left:791.00px;top:156.88px;font-size:10px;font-family:'Liberation Sans';font-weight:normal;color:#d0d0d0;transform:scaleX(0.870);transform-origin:0 0;">Plugin</div>
<div class="t" style="left:834.80px;top:157.69px;font-size:10px;font-family:'Liberation Mono';font-weight:normal;color:#d0d0d0;transform:scaleX(0.942);transform-origin:0 0;">tbb</div>
<div style="position:absolute;left:760px;top:167.5px;width:195px;height:13.75px;background:#141414"></div>
<div class="t" style="left:791.00px;top:170.63px;font-size:10px;font-family:'Liberation Sans';font-weight:normal;color:#d0d0d0;transform:scaleX(0.870);transform-origin:0 0;">Node N...</div>
<div class="t" style="left:834.80px;top:171.44px;font-size:10px;font-family:'Liberation Mono';font-weight:normal;color:#d0d0d0;transform:scaleX(0.942);transform-origin:0 0;">CV_async</div>
<div style="position:absolute;left:760px;top:181.25px;width:195px;height:13.75px;background:#2a2a2a"></div>
<div class="t" style="left:791.00px;top:184.38px;font-size:10px;font-family:'Liberation Sans';font-weight:normal;color:#d0d0d0;transform:scaleX(0.870);transform-origin:0 0;">Node W...</div>
<div class="t" style="left:834.80px;top:185.19px;font-size:10px;font-family:'Liberation Mono';font-weight:normal;color:#d0d0d0;transform:scaleX(0.942);transform-origin:0 0;">12897436</div>
<div style="position:absolute;left:760px;top:195.0px;width:195px;height:13.75px;background:#141414"></div>
<div class="t" style="left:791.00px;top:198.13px;font-size:10px;font-family:'Liberation Sans';font-weight:normal;color:#d0d0d0;transform:scaleX(0.870);transform-origin:0 0;">DFS Hie...</div>
<div class="t" style="left:834.80px;top:198.94px;font-size:10px;font-family:'Liberation Mono';font-weight:normal;color:#d0d0d0;transform:scaleX(0.942);transform-origin:0 0;">3</div>
<div style="position:absolute;left:760px;top:208.75px;width:195px;height:13.75px;background:#2a2a2a"></div>
<div class="t" style="left:791.00px;top:211.88px;font-size:10px;font-family:'Liberation Sans';font-weight:normal;color:#707070;transform:scaleX(0.870);transform-origin:0 0;">Node St...</div>
<div style="position:absolute;left:760px;top:222.5px;width:195px;height:13.75px;background:#141414"></div>
<div class="t" style="left:791.00px;top:225.63px;font-size:10px;font-family:'Liberation Sans';font-weight:normal;color:#707070;transform:scaleX(0.870);transform-origin:0 0;">Descript...</div>
<div style="position:absolute;left:760px;top:236.25px;width:195px;height:13.75px;background:#2a2a2a"></div>
<div class="t" style="left:791.00px;top:239.38px;font-size:10px;font-family:'Liberation Sans';font-weight:normal;color:#707070;transform:scaleX(0.870);transform-origin:0 0;">ID</div>
<div style="position:absolute;left:760px;top:250.0px;width:195px;height:13.75px;background:#141414"></div>
<div class="t" style="left:791.00px;top:253.14px;font-size:10px;font-family:'Liberation Sans';font-weight:normal;color:#707070;transform:scaleX(0.870);transform-origin:0 0;">C++ Fu...</div>
<div style="position:absolute;left:760px;top:263.75px;width:195px;height:13.75px;background:#2a2a2a"></div>
<svg width="974" height="669"><path d="M764.3,269.95 L770.5,269.95 L767.4,273.35 Z" fill="#b8b8b8"/></svg>
<div class="t" style="left:775.00px;top:266.89px;font-size:10px;font-family:'Liberation Sans';font-weight:normal;color:#c8c8c8;transform:scaleX(0.870);transform-origin:0 0;">Node Specific</div>
<div style="position:absolute;left:760px;top:277.5px;width:195px;height:13.75px;background:#141414"></div>
<div class="t" style="left:791.00px;top:280.64px;font-size:10px;font-family:'Liberation Sans';font-weight:normal;color:#d0d0d0;transform:scaleX(0.870);transform-origin:0 0;">Executio...</div>
<div class="t" style="left:834.80px;top:281.44px;font-size:10px;font-family:'Liberation Mono';font-weight:normal;color:#d0d0d0;transform:scaleX(0.942);transform-origin:0 0;">lightweight</div>
<div style="position:absolute;left:760px;top:291.25px;width:195px;height:13.75px;background:#2a2a2a"></div>
<div class="t" style="left:791.00px;top:294.39px;font-size:10px;font-family:'Liberation Sans';font-weight:normal;color:#d0d0d0;transform:scaleX(0.870);transform-origin:0 0;">Node C...</div>
<div class="t" style="left:834.80px;top:295.19px;font-size:10px;font-family:'Liberation Mono';font-weight:normal;color:#d0d0d0;transform:scaleX(0.942);transform-origin:0 0;">unlimited</div>
<div style="position:absolute;left:760px;top:305px;width:195px;height:1px;background:#2e2e2e"></div>
<div style="position:absolute;left:955.5px;top:99.7px;width:10px;height:205px;background:#2b2b2b"></div>
<div style="position:absolute;left:955.8px;top:100px;width:9.5px;height:10px;background:#3a3a3a;border:1px solid #4a4a4a"></div>
<div style="position:absolute;left:955.8px;top:295px;width:9.5px;height:10px;background:#3a3a3a;border:1px solid #4a4a4a"></div>
<div style="position:absolute;left:957px;top:111px;width:7px;height:102px;background:#424242;border-radius:1px"></div>
<svg width="974" height="669"><path d="M958,107 L963,107 L960.5,103.5 Z" fill="#c8c8c8"/><path d="M958,298 L963,298 L960.5,301.5 Z" fill="#c8c8c8"/></svg>
<div style="position:absolute;left:758px;top:310.5px;width:208px;height:12.5px;background:#343434"></div>
<div class="t" style="left:828.00px;top:312.04px;font-size:10px;font-family:'Liberation Sans';font-weight:normal;color:#c8c8c8;transform:scaleX(0.956);transform-origin:0 0;">Port Information</div>
<div style="position:absolute;left:757px;top:323px;width:211px;height:346px;background:#3a3a3a"></div>
<div class="t" style="left:760.00px;top:328.54px;font-size:10px;font-family:'Liberation Sans';font-weight:normal;color:#c0c0c0;transform:scaleX(0.931);transform-origin:0 0;">Input Ports</div>
<div style="position:absolute;left:759.5px;top:344px;width:206px;height:13.7px;background:#2e2e2e"></div>
<div style="position:absolute;left:831px;top:345px;width:1px;height:11.5px;background:#444"></div>
<div style="position:absolute;left:903px;top:345px;width:1px;height:11.5px;background:#444"></div>
<div class="t" style="left:761.00px;top:345.54px;font-size:10px;font-family:'Liberation Sans';font-weight:normal;color:#c8c8c8;transform:scaleX(1.012);transform-origin:0 0;">Port #</div>
<div class="t" style="left:834.00px;top:345.54px;font-size:10px;font-family:'Liberation Sans';font-weight:normal;color:#c8c8c8;transform:scaleX(0.921);transform-origin:0 0;">Port Name</div>
<div class="t" style="left:905.50px;top:345.54px;font-size:10px;font-family:'Liberation Sans';font-weight:normal;color:#c8c8c8;transform:scaleX(0.848);transform-origin:0 0;">Data Type</div>
<div style="position:absolute;left:759.5px;top:357.7px;width:206px;height:127.80000000000001px;background:#141414"></div>
<div class="t" style="left:776.00px;top:359.04px;font-size:10px;font-family:'Liberation Sans';font-weight:normal;color:#d0d0d0;transform:scaleX(0.989);transform-origin:0 0;">0</div>
<div class="t" style="left:834.50px;top:359.04px;font-size:10px;font-family:'Liberation Sans';font-weight:normal;color:#d0d0d0;transform:scaleX(0.870);transform-origin:0 0;">input_port_0</div>
<div class="t" style="left:905.50px;top:359.04px;font-size:10px;font-family:'Liberation Sans';font-weight:normal;color:#d0d0d0;transform:scaleX(1.041);transform-origin:0 0;">int</div>
<div style="position:absolute;left:759.5px;top:485.5px;width:206px;height:10px;background:#2b2b2b"></div>
<div style="position:absolute;left:762px;top:487px;width:192px;height:7px;background:#3f3f3f"></div>
<svg width="974" height="669"><path d="M765,490.5 L768,488 L768,493 Z" fill="#c8c8c8"/><path d="M961,490.5 L958,488 L958,493 Z" fill="#c8c8c8"/></svg>
<div class="t" style="left:760.00px;top:503.04px;font-size:10px;font-family:'Liberation Sans';font-weight:normal;color:#c0c0c0;transform:scaleX(0.926);transform-origin:0 0;">Output Ports</div>
<div style="position:absolute;left:759.5px;top:518.2px;width:206px;height:13.7px;background:#2e2e2e"></div>
<div style="position:absolute;left:831px;top:519.2px;width:1px;height:11.5px;background:#444"></div>
<div style="position:absolute;left:903px;top:519.2px;width:1px;height:11.5px;background:#444"></div>
<div class="t" style="left:761.00px;top:519.74px;font-size:10px;font-family:'Liberation Sans';font-weight:normal;color:#c8c8c8;transform:scaleX(1.012);transform-origin:0 0;">Port #</div>
<div class="t" style="left:834.00px;top:519.74px;font-size:10px;font-family:'Liberation Sans';font-weight:normal;color:#c8c8c8;transform:scaleX(0.921);transform-origin:0 0;">Port Name</div>
<div class="t" style="left:905.50px;top:519.74px;font-size:10px;font-family:'Liberation Sans';font-weight:normal;color:#c8c8c8;transform:scaleX(0.848);transform-origin:0 0;">Data Type</div>
<div style="position:absolute;left:759.5px;top:531.9000000000001px;width:206px;height:126.09999999999991px;background:#141414"></div>
<div class="t" style="left:776.00px;top:533.24px;font-size:10px;font-family:'Liberation Sans';font-weight:normal;color:#d0d0d0;transform:scaleX(0.989);transform-origin:0 0;">0</div>
<div class="t" style="left:834.50px;top:533.24px;font-size:10px;font-family:'Liberation Sans';font-weight:normal;color:#d0d0d0;transform:scaleX(0.870);transform-origin:0 0;">output_port_0</div>
<div class="t" style="left:905.50px;top:533.24px;font-size:10px;font-family:'Liberation Sans';font-weight:normal;color:#d0d0d0;transform:scaleX(1.041);transform-origin:0 0;">int</div>
<div style="position:absolute;left:759.5px;top:658px;width:206px;height:10px;background:#2b2b2b"></div>
<div style="position:absolute;left:762px;top:659.5px;width:192px;height:7px;background:#3f3f3f"></div>
<svg width="974" height="669"><path d="M765,663 L768,660.5 L768,665.5 Z" fill="#c8c8c8"/><path d="M961,663 L958,660.5 L958,665.5 Z" fill="#c8c8c8"/></svg>
<svg width="974" height="669"><path d="M855,307.5 h14" stroke="#8a8a8a" stroke-width="0.8" stroke-dasharray="1,1"/><path d="M857,497.5 h14" stroke="#8a8a8a" stroke-width="0.8" stroke-dasharray="1,1"/><path d="M440,275.5 h12" stroke="#8a8a8a" stroke-width="0.8" stroke-dasharray="1,1"/></svg>
<div style="position:absolute;left:2px;top:49px;width:972px;height:1.3px;background:#474747"></div>
<div style="position:absolute;left:6.3px;top:49px;width:126.4px;height:614.5px;border:2px solid #ff2020"></div>
<div style="position:absolute;left:136px;top:51px;width:616.2px;height:224px;border:2px solid #ff2020"></div>
<div style="position:absolute;left:136px;top:279px;width:618px;height:366px;border:2px solid #ff2020"></div>
<div style="position:absolute;left:0px;top:0px;width:1.6px;height:669px;background:#6fd0f6"></div>
</body></html>
